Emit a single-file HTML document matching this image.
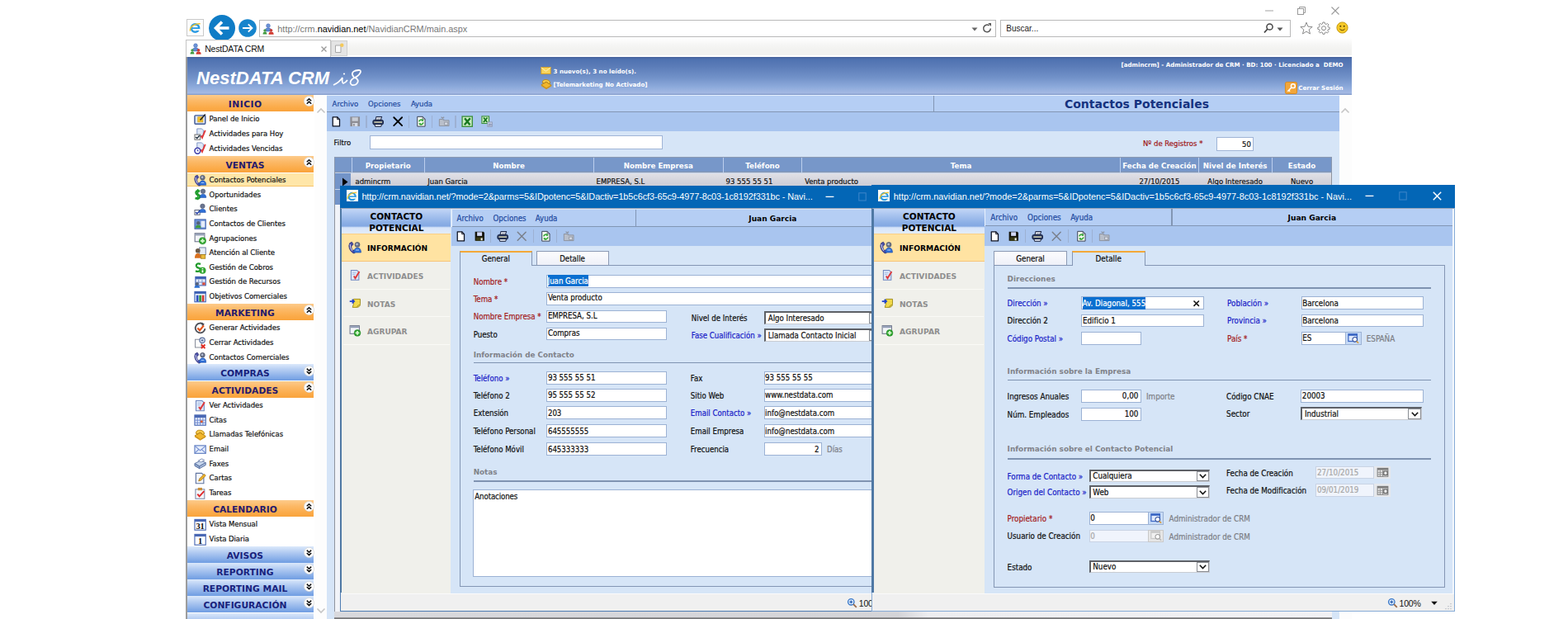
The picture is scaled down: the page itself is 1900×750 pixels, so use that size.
<!DOCTYPE html>
<html lang="es">
<head>
<meta charset="utf-8">
<title>NestDATA CRM</title>
<style>
html,body{margin:0;padding:0;background:#fff;}
body{width:1900px;height:750px;overflow:hidden;position:relative;font-family:"Liberation Sans",sans-serif;}
div,svg{position:absolute;}
svg{overflow:visible;display:block;}
.win{overflow:hidden;}
.abs{position:absolute;}
.t,.ui,.hd,.sh,.ttl,.gh,.tb,.ph,.pi,.pt,.sec,.logo{white-space:nowrap;}
.t{font-family:"DejaVu Sans Condensed","Liberation Sans",sans-serif;font-size:9.45px;color:#111;letter-spacing:0;-webkit-text-stroke:0.2px currentColor;}
.sb{letter-spacing:-0.03px;}
.p1 .t{font-size:9.6px;}
.p2 .t{font-size:9.75px;}
.p2 .sec{font-size:8.9px;}
.p2 .pt{font-size:9.15px;}
.mn{color:#1f4aa0;}
.dis{color:#a9a9a9;}
.ui{font-family:"Liberation Sans",sans-serif;font-size:10.9px;color:#444;}
.tb{font-family:"Liberation Sans",sans-serif;font-size:10.9px;color:#fff;}
.hd{font-family:"DejaVu Sans","Liberation Sans",sans-serif;font-size:7.1px;font-weight:700;color:#fff;}
.sh{font-family:"DejaVu Sans","Liberation Sans",sans-serif;font-size:10.7px;font-weight:700;color:#251a6c;}
.ttl{font-family:"DejaVu Sans","Liberation Sans",sans-serif;font-size:14px;font-weight:700;color:#15327f;}
.gh{font-family:"DejaVu Sans","Liberation Sans",sans-serif;font-size:8.7px;font-weight:700;color:#fff;}
.ph{font-family:"DejaVu Sans","Liberation Sans",sans-serif;font-size:10.5px;font-weight:700;color:#000;}
.pi{font-family:"DejaVu Sans","Liberation Sans",sans-serif;font-size:9.6px;font-weight:700;}
.pt{font-family:"DejaVu Sans","Liberation Sans",sans-serif;font-size:9.05px;font-weight:700;color:#000;}
.sec{font-family:"DejaVu Sans","Liberation Sans",sans-serif;font-size:8.8px;font-weight:700;color:#808289;}
.logo{font-family:"Liberation Sans",sans-serif;font-size:22px;font-weight:700;font-style:italic;color:#fff;}
</style>
</head>
<body>
<div style="left:225.3px;top:0px;width:1412.9px;height:69.5px;background:linear-gradient(#fff 0,#fff 46px,#f6f6f5 54px,#f2f2f0 60px,#f2f2f0 66.5px,#fff 67.5px);"></div>
<div style="left:226.2px;top:23.4px;width:20.4px;height:20.4px;background:#fdfdfd;border:1px solid #c9c9c9;box-sizing:border-box;"></div>
<svg style="left:229.2px;top:26.2px;" width="15" height="15" viewBox="0 0 16 16"><circle cx="8" cy="8.6" r="5" fill="none" stroke="#2b9be3" stroke-width="2.7"/><rect x="4" y="7.7" width="9.4" height="1.9" fill="#2b9be3"/><rect x="9.2" y="9.6" width="5" height="2.1" fill="#fdfdf6"/><path d="M1.6 12.4 C0.6 7.4 7 2.2 14.6 3" fill="none" stroke="#f0c430" stroke-width="1.6"/></svg>
<svg style="left:252px;top:17px;" width="34" height="34" viewBox="0 0 34 34"><circle cx="17" cy="17" r="16" fill="#0f7cc6"/><path d="M25.5 17 H10.5 M17 9.5 L9.5 17 L17 24.5" fill="none" stroke="#fff" stroke-width="3.6"/></svg>
<svg style="left:288px;top:22px;" width="24" height="24" viewBox="0 0 24 24"><circle cx="12" cy="12" r="10.8" fill="#1684cc"/><path d="M6 12 H17.5 M12.8 7.3 L17.5 12 L12.8 16.7" fill="none" stroke="#fff" stroke-width="1.8"/></svg>
<div style="left:314px;top:24px;width:892.8px;height:21px;background:#fff;border:1px solid #b9b9b9;box-sizing:border-box;"></div>
<svg style="left:317.5px;top:27.5px;" width="14" height="14" viewBox="0 0 16 16"><circle cx="8" cy="3.6" r="2.7" fill="#6c93d8" stroke="#4a6fb4" stroke-width=".6"/><path d="M3.6 11.4 Q3.6 6.6 8 6.6 Q12.4 6.6 12.4 11.4Z" fill="#5f8ad6" stroke="#4268b0" stroke-width=".6"/><circle cx="3.4" cy="10.2" r="1.9" fill="#4c9c46"/><path d="M0.6 15.4 Q0.6 12 3.4 12 Q6.2 12 6.2 15.4Z" fill="#3f9a3f"/><circle cx="12" cy="10" r="2.1" fill="#c9403a"/><path d="M8.6 15.6 Q8.6 12 12 12 Q15.6 12 15.6 15.6Z" fill="#d23a2f"/></svg>
<div class="ui" style="left:336.3px;top:27.6px;height:14px;line-height:14px;"><span style="color:#777">http://crm.</span><span style="color:#000">navidian.net</span><span style="color:#777">/NavidianCRM/main.aspx</span></div>
<svg style="left:1176px;top:31px;" width="10" height="8" viewBox="0 0 10 8"><path d="M1.5 2.5 H8.5 L5 6.5Z" fill="#666"/></svg>
<svg style="left:1189px;top:27px;" width="14" height="14" viewBox="0 0 14 14"><path d="M11.3 7.5 A4.3 4.3 0 1 1 9.6 4" fill="none" stroke="#555" stroke-width="1.5"/><path d="M8.2 1 H12 V5Z" fill="#555"/></svg>
<div style="left:1212px;top:24px;width:351.6px;height:21px;background:#fff;border:1px solid #b9b9b9;box-sizing:border-box;"></div>
<div class="ui" style="left:1219.3px;top:28.2px;height:14px;line-height:14px;color:#222;font-size:10px;">Buscar...</div>
<svg style="left:1530px;top:27px;" width="14" height="14" viewBox="0 0 14 14"><circle cx="8.5" cy="5.5" r="3.6" fill="none" stroke="#444" stroke-width="1.5"/><path d="M6 8 L2 12.5" stroke="#444" stroke-width="1.8"/></svg>
<svg style="left:1546px;top:31px;" width="10" height="8" viewBox="0 0 10 8"><path d="M1.5 2.5 H8.5 L5 6.5Z" fill="#555"/></svg>
<svg style="left:1574.5px;top:25.5px;" width="16" height="16" viewBox="0 0 16 16"><path d="M8 1.2 L10 6.2 L15.2 6.5 L11.2 9.9 L12.5 15 L8 12.1 L3.5 15 L4.8 9.9 L0.8 6.5 L6 6.2Z" fill="#fff" stroke="#8a8a8a" stroke-width="1"/></svg>
<svg style="left:1596px;top:25.6px;" width="16" height="16" viewBox="0 0 16 16"><path d="M6.9 1 H9.1 L9.5 2.9 L10.9 3.5 L12.5 2.4 L13.9 3.9 L12.9 5.5 L13.4 6.9 L15.2 7.2 V9.3 L13.4 9.6 L12.8 11 L13.8 12.5 L12.4 14 L10.8 12.9 L9.5 13.5 L9.1 15.3 H6.9 L6.5 13.5 L5.2 12.9 L3.6 14 L2.2 12.5 L3.2 11 L2.6 9.6 L0.8 9.3 V7.2 L2.6 6.9 L3.2 5.5 L2.2 3.9 L3.6 2.4 L5.2 3.5 L6.5 2.9Z" fill="#fff" stroke="#8a8a8a" stroke-width="1"/><circle cx="8" cy="8.2" r="2.5" fill="none" stroke="#8a8a8a" stroke-width="1"/></svg>
<svg style="left:1618.5px;top:26px;" width="15" height="15" viewBox="0 0 15 15"><circle cx="7.5" cy="7.5" r="6.6" fill="#f6c928" stroke="#c79a10" stroke-width="1"/><circle cx="5.3" cy="5.8" r="1" fill="#5a4200"/><circle cx="9.7" cy="5.8" r="1" fill="#5a4200"/><path d="M4.3 9 Q7.5 12.4 10.7 9" fill="none" stroke="#5a4200" stroke-width="1"/></svg>
<svg style="left:1532px;top:8px;" width="12" height="10" viewBox="0 0 12 10"><path d="M1 5 H11" stroke="#b8b8b8" stroke-width="1.3"/></svg>
<svg style="left:1571px;top:7px;" width="12" height="12" viewBox="0 0 12 12"><rect x="1.5" y="3.5" width="7" height="7" fill="none" stroke="#9a9a9a" stroke-width="1"/><path d="M3.5 3.5 V1.5 H10.5 V8.5 H8.5" fill="none" stroke="#9a9a9a" stroke-width="1"/></svg>
<svg style="left:1612px;top:7px;" width="12" height="12" viewBox="0 0 12 12"><path d="M1.5 1.5 L10.5 10.5 M10.5 1.5 L1.5 10.5" stroke="#9a9a9a" stroke-width="1.1"/></svg>
<div style="left:225.3px;top:47.6px;width:175.7px;height:22.4px;background:#fff;border:1px solid #c4c4c4;border-bottom:0;box-sizing:border-box;"></div>
<svg style="left:230px;top:52px;" width="14" height="14" viewBox="0 0 16 16"><circle cx="8" cy="3.6" r="2.7" fill="#6c93d8" stroke="#4a6fb4" stroke-width=".6"/><path d="M3.6 11.4 Q3.6 6.6 8 6.6 Q12.4 6.6 12.4 11.4Z" fill="#5f8ad6" stroke="#4268b0" stroke-width=".6"/><circle cx="3.4" cy="10.2" r="1.9" fill="#4c9c46"/><path d="M0.6 15.4 Q0.6 12 3.4 12 Q6.2 12 6.2 15.4Z" fill="#3f9a3f"/><circle cx="12" cy="10" r="2.1" fill="#c9403a"/><path d="M8.6 15.6 Q8.6 12 12 12 Q15.6 12 15.6 15.6Z" fill="#d23a2f"/></svg>
<div class="ui" style="left:248.2px;top:51.8px;height:14px;line-height:14px;color:#111;font-size:10.5px;letter-spacing:-0.2px;">NestDATA CRM</div>
<svg style="left:387.5px;top:54.5px;" width="9" height="9" viewBox="0 0 9 9"><path d="M1.5 1.5 L7.5 7.5 M7.5 1.5 L1.5 7.5" stroke="#9a9a9a" stroke-width="1.3"/></svg>
<div style="left:401.3px;top:48.6px;width:19.3px;height:19px;background:#e4e4e4;border:1px solid #cfcfcf;box-sizing:border-box;"></div>
<svg style="left:405px;top:51.5px;" width="12" height="13" viewBox="0 0 12 13"><path d="M1.5 3 H8 V11.5 H1.5Z" fill="#fafafa" stroke="#a8a8a8" stroke-width="1"/><circle cx="9.3" cy="2.8" r="2.2" fill="#f4c95a"/></svg>
<div style="left:225.3px;top:69.3px;width:1412.9px;height:45.9px;background:linear-gradient(#46619a 0,#4f72b1 3px,#5b7cb8 25%,#7292c9 55%,#8eabdc 80%,#a4b9e3 95%,#7f98c9 100%);"></div>
<div class="logo" style="left:238.1px;top:80.6px;height:28px;line-height:28px;">NestDATA CRM</div>
<svg style="left:402px;top:82px;" width="38" height="24" viewBox="0 0 38 24"><path d="M2 21 Q9 18 13 12 Q12 18 14 19 Q17 18 19 15" fill="none" stroke="#fff" stroke-width="1.7"/><circle cx="15" cy="7.5" r="1.1" fill="#fff"/><path d="M33 3 Q24 3.5 25 8.5 Q26 12 30 13 Q34 17 29 20.5 Q23 22.5 22.5 18 Q23 14 28 12 Q34 9 35 5 Q35 2.5 32 3" fill="none" stroke="#fff" stroke-width="1.8"/></svg>
<svg style="left:654.5px;top:79.5px;" width="13" height="11" viewBox="0 2 16 12"><rect x="1" y="3" width="14" height="10" fill="#f8d45a" stroke="#d49a1a" stroke-width="1"/><path d="M1 3.5 L8 9 L15 3.5" fill="none" stroke="#fff3c0" stroke-width="1.2"/></svg>
<div class="hd" style="left:670.5px;top:79.9px;height:14px;line-height:14px;">3 nuevo(s), 3 no leído(s).</div>
<svg style="left:654.5px;top:94.5px;" width="14" height="13" viewBox="0 1 16 14"><path d="M1 9.4 L8 5.6 L15 10 L8 14.4Z" fill="#f2b62c" stroke="#b8820e" stroke-width="1"/><path d="M1 9.4 V11 L8 15.6 V14.4Z M8 14.4 V15.6 L15 11.4 V10Z" fill="#d4961a"/><path d="M2.6 6.6 Q2.6 1.8 8 2.4 Q13.4 3 13.2 7.4 L10.6 7.8 Q10.2 5.6 8 5.4 Q6 5.2 5.4 7.2Z" fill="#f8cc4c" stroke="#b8820e" stroke-width="1"/></svg>
<div class="hd" style="left:670.5px;top:95.9px;height:14px;line-height:14px;">[Telemarketing No Activado]</div>
<div class="hd" style="left:1127.6px;top:71.7px;height:14px;line-height:14px;width:500px;text-align:right;">[admincrm] - Administrador de CRM · BD: 100 · Licenciado a&nbsp; DEMO</div>
<svg style="left:1557px;top:98.5px;" width="15" height="15" viewBox="0 0 16 16"><rect x="0.5" y="0.5" width="15" height="15" rx="2" fill="#f2a63a" stroke="#d98a1c" stroke-width="1"/><circle cx="10.5" cy="5.5" r="2.6" fill="none" stroke="#fff" stroke-width="1.6"/><path d="M8.5 7.5 L3.5 12.5 M5 11 L6.5 12.5" stroke="#fff" stroke-width="1.6"/></svg>
<div class="hd" style="left:1127.6px;top:99.5px;height:14px;line-height:14px;width:500px;text-align:right;">Cerrar Sesión</div>
<div style="left:225.3px;top:115px;width:155.2px;height:635px;background:#fff;"></div>
<div style="left:225.4px;top:69.3px;width:1.2px;height:680.7px;background:#9c9c9c;"></div>
<div style="left:380.5px;top:115px;width:15.7px;height:635px;background:#fdfdfd;"></div>
<svg style="left:382.5px;top:129.5px;" width="12" height="8" viewBox="0 0 12 8"><path d="M1.5 6.5 L6 2 L10.5 6.5" fill="none" stroke="#c6c6c6" stroke-width="1.6"/></svg>
<svg style="left:382.5px;top:735.5px;" width="12" height="8" viewBox="0 0 12 8"><path d="M1.5 1.5 L6 6 L10.5 1.5" fill="none" stroke="#c6c6c6" stroke-width="1.6"/></svg>
<div style="left:227.2px;top:114.8px;width:153.3px;height:20px;background:linear-gradient(#fdcb8b 0,#fcb967 35%,#fbab49 75%,#f9a33c 100%);"></div>
<div class="sh" style="left:227.2px;top:118.8px;height:16px;line-height:16px;width:139.5px;text-align:center;letter-spacing:0.5px;text-indent:0.5px;">INICIO</div>
<svg style="left:367.5px;top:116.1px;" width="13" height="13" viewBox="0 0 13 13"><circle cx="6.5" cy="6.5" r="6" fill="#fff" stroke="#d8d8d8" stroke-width=".8"/><path d="M3.8 6.3 L6.5 3.7 L9.2 6.3 M3.8 9.7 L6.5 7.1 L9.2 9.7" fill="none" stroke="#111" stroke-width="1.5"/></svg>
<svg style="left:234.8px;top:137.1px;" width="15.2" height="15.2" viewBox="0 0 16 16"><rect x="1" y="3" width="13.5" height="11" rx="1" fill="#dfe7f6" stroke="#3f5894" stroke-width="1.5"/><rect x="5" y="5" width="6.5" height="6.5" fill="#f2c12e" stroke="#c99a14" stroke-width=".6"/><path d="M8 9 L14.5 1.5" stroke="#222" stroke-width="1.6"/></svg>
<div class="t sb" style="left:253.6px;top:137.2px;height:14px;line-height:14px;">Panel de Inicio</div>
<svg style="left:234.8px;top:154.75px;" width="15.2" height="15.2" viewBox="0 0 16 16"><path d="M4 1 H10 L12 3 V10 H4Z" fill="#dfe8f7" stroke="#7d93c4" stroke-width="1"/><rect x="1" y="8.5" width="7" height="6.5" fill="#fff" stroke="#666" stroke-width="1"/><path d="M2.2 11.5 L4 13.3 L7 9.8" stroke="#123" stroke-width="1.4" fill="none"/><path d="M9 10 L10.5 12.5 L14.5 3" stroke="#e0383a" stroke-width="2" fill="none"/></svg>
<div class="t sb" style="left:253.6px;top:154.85px;height:14px;line-height:14px;">Actividades para Hoy</div>
<svg style="left:234.8px;top:172.4px;" width="15.2" height="15.2" viewBox="0 0 16 16"><path d="M4 1 H10 L12 3 V10 H4Z" fill="#dfe8f7" stroke="#7d93c4" stroke-width="1"/><circle cx="4.6" cy="11.3" r="3.6" fill="#fff" stroke="#3a3aa8" stroke-width="1.6"/><path d="M4.6 9.5 V11.5 H6" stroke="#3a3aa8" stroke-width="1" fill="none"/><path d="M9 10 L10.5 12.5 L14.5 3" stroke="#e0383a" stroke-width="2" fill="none"/></svg>
<div class="t sb" style="left:253.6px;top:172.5px;height:14px;line-height:14px;">Actividades Vencidas</div>
<div style="left:227.2px;top:188.5px;width:153.3px;height:20px;background:linear-gradient(#fdcb8b 0,#fcb967 35%,#fbab49 75%,#f9a33c 100%);"></div>
<div class="sh" style="left:227.2px;top:192.5px;height:16px;line-height:16px;width:139.5px;text-align:center;">VENTAS</div>
<svg style="left:367.5px;top:189.8px;" width="13" height="13" viewBox="0 0 13 13"><circle cx="6.5" cy="6.5" r="6" fill="#fff" stroke="#d8d8d8" stroke-width=".8"/><path d="M3.8 6.3 L6.5 3.7 L9.2 6.3 M3.8 9.7 L6.5 7.1 L9.2 9.7" fill="none" stroke="#111" stroke-width="1.5"/></svg>
<div style="left:227.2px;top:209.5px;width:153.3px;height:16.5px;background:#ffe6a8;border-bottom:1px solid #f7c46a;box-sizing:border-box;"></div>
<svg style="left:234.8px;top:210.8px;" width="15.2" height="15.2" viewBox="0 0 16 16"><path d="M4.4 1.2 Q0.8 1.6 0.8 6 Q1.2 11.6 6 14.8 Q8.2 15.4 8.8 13.2 L6.6 10.8 Q5.4 11.8 4.7 10.4 Q3.5 8 4 5.6 Q5.8 5.6 6 3.8Z" fill="#4a4fa6" stroke="#2c2f74" stroke-width=".7"/><path d="M2.2 4 Q2 8 4.6 11.8" fill="none" stroke="#d5d8f4" stroke-width="1"/><circle cx="11" cy="4.4" r="3" fill="#6a7288" stroke="#474e62" stroke-width=".6"/><path d="M6.9 14 Q6.9 8.2 11.1 8.2 Q15.5 8.2 15.5 14Z" fill="#2f6fd6" stroke="#1c4ca6" stroke-width=".6"/><circle cx="10.6" cy="4" r="1.3" fill="#b4bdd2"/><path d="M9.2 11 H13" stroke="#a8c8f6" stroke-width="1.1"/></svg>
<div class="t sb" style="left:253.6px;top:210.9px;height:14px;line-height:14px;">Contactos Potenciales</div>
<svg style="left:234.8px;top:228.45px;" width="15.2" height="15.2" viewBox="0 0 16 16"><path d="M7.6 4 Q2.6 2.2 2.6 6 Q2.8 7.8 5 8.4 Q8 9.2 7.4 11.6 Q6.4 14 1.6 12.6" fill="none" stroke="#1f9c2c" stroke-width="2.7"/><path d="M4.9 1.2 V15" stroke="#1f9c2c" stroke-width="1.7"/><circle cx="11.6" cy="4" r="2.9" fill="#6a7590" stroke="#4a5268" stroke-width=".6"/><path d="M7.8 12 Q7.8 7.6 11.6 7.6 Q15.6 7.6 15.6 12Z" fill="#2f6fd6" stroke="#1f4fa8" stroke-width=".6"/></svg>
<div class="t sb" style="left:253.6px;top:228.55px;height:14px;line-height:14px;">Oportunidades</div>
<svg style="left:234.8px;top:246.1px;" width="15.2" height="15.2" viewBox="0 0 16 16"><rect x="1" y="9" width="6.6" height="6" fill="#fff" stroke="#555c70" stroke-width="1"/><path d="M2.2 11.6 L4 13.6 L7.6 9.4" stroke="#2540a8" stroke-width="1.6" fill="none"/><circle cx="11" cy="4" r="2.9" fill="#6a7590" stroke="#4a5268" stroke-width=".6"/><path d="M7 12 Q7 7.6 11 7.6 Q15 7.6 15 12Z" fill="#2f6fd6" stroke="#1f4fa8" stroke-width=".6"/></svg>
<div class="t sb" style="left:253.6px;top:246.2px;height:14px;line-height:14px;">Clientes</div>
<svg style="left:234.8px;top:263.75px;" width="15.2" height="15.2" viewBox="0 0 16 16"><rect x="1" y="2" width="14" height="12" fill="#6f93d8" stroke="#3e5fa8" stroke-width="1"/><rect x="9" y="4" width="5" height="8" fill="#e5ecf8"/><circle cx="5.5" cy="6.5" r="2.3" fill="#54627a"/><path d="M2 13 Q2 9 5.5 9 Q9 9 9 13Z" fill="#3f9a3f"/></svg>
<div class="t sb" style="left:253.6px;top:263.85px;height:14px;line-height:14px;">Contactos de Clientes</div>
<svg style="left:234.8px;top:281.4px;" width="15.2" height="15.2" viewBox="0 0 16 16"><rect x="1.2" y="1.8" width="12.4" height="10.6" fill="#f2f4f8" stroke="#6a7288" stroke-width="1.1"/><rect x="1.8" y="2.4" width="11.2" height="2.2" fill="#8f9ab4"/><circle cx="11" cy="11.4" r="4.3" fill="#2ea52e" stroke="#1c7a1c" stroke-width=".5"/><path d="M11 8.8 V14 M8.4 11.4 H13.6" stroke="#d8f8d0" stroke-width="1.9"/></svg>
<div class="t sb" style="left:253.6px;top:281.5px;height:14px;line-height:14px;">Agrupaciones</div>
<svg style="left:234.8px;top:299.05px;" width="15.2" height="15.2" viewBox="0 0 16 16"><rect x="7" y="1" width="8" height="9" fill="#e6ecf6" stroke="#6c7da0" stroke-width="1"/><circle cx="5" cy="5" r="3" fill="#6a5a4a"/><path d="M1 14.5 Q1 8.5 5 8.5 Q9 8.5 9 14.5Z" fill="#d9701e"/><rect x="9" y="10" width="5.5" height="5" fill="#e9b93a" stroke="#a57a10" stroke-width=".8"/></svg>
<div class="t sb" style="left:253.6px;top:299.15px;height:14px;line-height:14px;">Atención al Cliente</div>
<svg style="left:234.8px;top:316.7px;" width="15.2" height="15.2" viewBox="0 0 16 16"><path d="M8.5 3 Q2.5 1.5 3 5.5 Q3.5 7.5 6 8 Q9 8.8 8 11 Q7 13.5 2 12" fill="none" stroke="#1f9a2a" stroke-width="2.4"/><circle cx="11" cy="11.3" r="4.3" fill="#2fa52f"/><path d="M11 8.5 V9.8 M11 10.8 V14" stroke="#fff" stroke-width="1.8"/></svg>
<div class="t sb" style="left:253.6px;top:316.8px;height:14px;line-height:14px;">Gestión de Cobros</div>
<svg style="left:234.8px;top:334.35px;" width="15.2" height="15.2" viewBox="0 0 16 16"><rect x="2" y="1.5" width="13" height="11" fill="#e8eefb" stroke="#3f62b4" stroke-width="1.2"/><rect x="2" y="1.5" width="13" height="3" fill="#3f62b4"/><path d="M6 5 V12 M10.5 5 V12 M2 8.5 H15" stroke="#7c92c8" stroke-width="1"/><rect x="10.8" y="8.8" width="3.6" height="3.2" fill="#d84a3a"/><circle cx="4" cy="10.5" r="2.2" fill="#54627a"/><path d="M0.5 15.5 Q0.5 12.3 4 12.3 Q7.5 12.3 7.5 15.5Z" fill="#2c6fd1"/></svg>
<div class="t sb" style="left:253.6px;top:334.45px;height:14px;line-height:14px;">Gestión de Recursos</div>
<svg style="left:234.8px;top:352px;" width="15.2" height="15.2" viewBox="0 0 16 16"><rect x="1" y="1.5" width="14" height="13" fill="#e8eefb" stroke="#3f62b4" stroke-width="1.2"/><rect x="1" y="1.5" width="14" height="2.6" fill="#3f62b4"/><rect x="3" y="6" width="2.8" height="8" fill="#2b50c0"/><rect x="6.6" y="6" width="2.8" height="8" fill="#2f9a3a"/><rect x="10.2" y="6" width="2.8" height="8" fill="#d23a2f"/></svg>
<div class="t sb" style="left:253.6px;top:352.1px;height:14px;line-height:14px;">Objetivos Comerciales</div>
<div style="left:227.2px;top:368px;width:153.3px;height:20px;background:linear-gradient(#fdcb8b 0,#fcb967 35%,#fbab49 75%,#f9a33c 100%);"></div>
<div class="sh" style="left:227.2px;top:372px;height:16px;line-height:16px;width:139.5px;text-align:center;">MARKETING</div>
<svg style="left:367.5px;top:369.3px;" width="13" height="13" viewBox="0 0 13 13"><circle cx="6.5" cy="6.5" r="6" fill="#fff" stroke="#d8d8d8" stroke-width=".8"/><path d="M3.8 6.3 L6.5 3.7 L9.2 6.3 M3.8 9.7 L6.5 7.1 L9.2 9.7" fill="none" stroke="#111" stroke-width="1.5"/></svg>
<svg style="left:234.8px;top:390.3px;" width="15.2" height="15.2" viewBox="0 0 16 16"><path d="M12.6 3.6 A6.2 6.2 0 1 0 14.2 8.6" fill="none" stroke="#4c4f58" stroke-width="1.9"/><path d="M9.6 1.2 L13.4 3 L10.4 5.4Z" fill="#4c4f58"/><path d="M4.6 7.8 L7.4 10.8 L12.6 4.6" fill="none" stroke="#e2541c" stroke-width="2.3"/></svg>
<div class="t sb" style="left:253.6px;top:390.4px;height:14px;line-height:14px;">Generar Actividades</div>
<svg style="left:234.8px;top:407.95px;" width="15.2" height="15.2" viewBox="0 0 16 16"><path d="M1.6 3.4 H7.6 L9.6 5.4 V13.6 H1.6Z" fill="#fdfdfd" stroke="#8a8f9c" stroke-width="1.1"/><circle cx="10.6" cy="4.6" r="3.4" fill="#d9e2f2" stroke="#5a6f9c" stroke-width="1.2"/><circle cx="10.6" cy="4.6" r="1.3" fill="#5a6f9c"/><path d="M9.4 10 L14.2 14.8 M14.2 10 L9.4 14.8" stroke="#e2281e" stroke-width="1.9"/></svg>
<div class="t sb" style="left:253.6px;top:408.05px;height:14px;line-height:14px;">Cerrar Actividades</div>
<svg style="left:234.8px;top:425.6px;" width="15.2" height="15.2" viewBox="0 0 16 16"><path d="M4.4 1.2 Q0.8 1.6 0.8 6 Q1.2 11.6 6 14.8 Q8.2 15.4 8.8 13.2 L6.6 10.8 Q5.4 11.8 4.7 10.4 Q3.5 8 4 5.6 Q5.8 5.6 6 3.8Z" fill="#4a4fa6" stroke="#2c2f74" stroke-width=".7"/><path d="M2.2 4 Q2 8 4.6 11.8" fill="none" stroke="#d5d8f4" stroke-width="1"/><circle cx="11" cy="4.4" r="3" fill="#6a7288" stroke="#474e62" stroke-width=".6"/><path d="M6.9 14 Q6.9 8.2 11.1 8.2 Q15.5 8.2 15.5 14Z" fill="#2f6fd6" stroke="#1c4ca6" stroke-width=".6"/><circle cx="10.6" cy="4" r="1.3" fill="#b4bdd2"/><path d="M9.2 11 H13" stroke="#a8c8f6" stroke-width="1.1"/></svg>
<div class="t sb" style="left:253.6px;top:425.7px;height:14px;line-height:14px;">Contactos Comerciales</div>
<div style="left:227.2px;top:441.4px;width:153.3px;height:20px;background:linear-gradient(#dce9fb 0,#b9d0f3 30%,#8fb3ea 70%,#6f9de2 100%);"></div>
<div class="sh" style="left:227.2px;top:445.4px;height:16px;line-height:16px;width:139.5px;text-align:center;color:#18227c;">COMPRAS</div>
<svg style="left:367.5px;top:442.7px;" width="13" height="13" viewBox="0 0 13 13"><circle cx="6.5" cy="6.5" r="6" fill="#fff" stroke="#d8d8d8" stroke-width=".8"/><path d="M3.8 3.6 L6.5 6.2 L9.2 3.6 M3.8 7 L6.5 9.6 L9.2 7" fill="none" stroke="#111" stroke-width="1.5"/></svg>
<div style="left:227.2px;top:461.5px;width:153.3px;height:20px;background:linear-gradient(#fdcb8b 0,#fcb967 35%,#fbab49 75%,#f9a33c 100%);"></div>
<div class="sh" style="left:227.2px;top:465.5px;height:16px;line-height:16px;width:139.5px;text-align:center;">ACTIVIDADES</div>
<svg style="left:367.5px;top:462.8px;" width="13" height="13" viewBox="0 0 13 13"><circle cx="6.5" cy="6.5" r="6" fill="#fff" stroke="#d8d8d8" stroke-width=".8"/><path d="M3.8 6.3 L6.5 3.7 L9.2 6.3 M3.8 9.7 L6.5 7.1 L9.2 9.7" fill="none" stroke="#111" stroke-width="1.5"/></svg>
<svg style="left:234.8px;top:483.8px;" width="15.2" height="15.2" viewBox="0 0 16 16"><path d="M2.6 1.6 H10.4 L13 4.2 V14.4 H2.6Z" fill="#dbe7f9" stroke="#6f86c0" stroke-width="1.1"/><path d="M4.4 4.6 H9 M4.4 7 H8" stroke="#9fb4e0" stroke-width=".9"/><path d="M6.4 9.4 L8.2 12.2 L13.6 3.4" stroke="#de3a3c" stroke-width="2.1" fill="none"/></svg>
<div class="t sb" style="left:253.6px;top:483.9px;height:14px;line-height:14px;">Ver Actividades</div>
<svg style="left:234.8px;top:501.45px;" width="15.2" height="15.2" viewBox="0 0 16 16"><rect x="1" y="2" width="14" height="13" fill="#e9effb" stroke="#4a68b4" stroke-width="1.2"/><rect x="1" y="2" width="14" height="3.4" fill="#4a68b4"/><path d="M4.5 5.4 V15 M8 5.4 V15 M11.5 5.4 V15 M1 8.6 H15 M1 11.8 H15" stroke="#6f88d0" stroke-width="1"/><rect x="8.4" y="9" width="2.8" height="2.6" fill="#e0582a"/></svg>
<div class="t sb" style="left:253.6px;top:501.55px;height:14px;line-height:14px;">Citas</div>
<svg style="left:234.8px;top:519.1px;" width="15.2" height="15.2" viewBox="0 0 16 16"><path d="M1 9.4 L8 5.6 L15 10 L8 14.4Z" fill="#f2b62c" stroke="#b8820e" stroke-width="1"/><path d="M1 9.4 V11 L8 15.6 V14.4Z M8 14.4 V15.6 L15 11.4 V10Z" fill="#d4961a"/><path d="M2.6 6.6 Q2.6 1.8 8 2.4 Q13.4 3 13.2 7.4 L10.6 7.8 Q10.2 5.6 8 5.4 Q6 5.2 5.4 7.2Z" fill="#f8cc4c" stroke="#b8820e" stroke-width="1"/></svg>
<div class="t sb" style="left:253.6px;top:519.2px;height:14px;line-height:14px;">Llamadas Telefónicas</div>
<svg style="left:234.8px;top:536.75px;" width="15.2" height="15.2" viewBox="0 0 16 16"><rect x="1" y="3" width="14" height="10" fill="#e6eefc" stroke="#5f7dc0" stroke-width="1.2"/><path d="M1.2 3.6 L8 9.4 L14.8 3.6 M1.2 12.6 L6 8 M14.8 12.6 L10 8" fill="none" stroke="#6f8ad0" stroke-width="1.1"/></svg>
<div class="t sb" style="left:253.6px;top:536.85px;height:14px;line-height:14px;">Email</div>
<svg style="left:234.8px;top:554.4px;" width="15.2" height="15.2" viewBox="0 0 16 16"><path d="M1 8 L9 4 L15 7 L7 11.5Z" fill="#c9d8ee" stroke="#5c72a0" stroke-width="1"/><path d="M1 8 V11 L7 14.5 V11.5Z" fill="#8ea6cc" stroke="#5c72a0" stroke-width="1"/><path d="M7 11.5 V14.5 L15 10 V7Z" fill="#a9bcdc" stroke="#5c72a0" stroke-width="1"/><path d="M5.6 4.4 L10 2 L13.4 3.8 L9 6.2Z" fill="#f8fafd" stroke="#5c72a0" stroke-width=".8"/></svg>
<div class="t sb" style="left:253.6px;top:554.5px;height:14px;line-height:14px;">Faxes</div>
<svg style="left:234.8px;top:572.05px;" width="15.2" height="15.2" viewBox="0 0 16 16"><path d="M2.5 1.5 H10 L12.5 4 V14.5 H2.5Z" fill="#f5f7fc" stroke="#5f74a0" stroke-width="1.2"/><path d="M6 11.5 L7 8.5 L13 2.5 L15 4.5 L9 10.5Z" fill="#f0b429" stroke="#9a6a10" stroke-width=".8"/></svg>
<div class="t sb" style="left:253.6px;top:572.15px;height:14px;line-height:14px;">Cartas</div>
<svg style="left:234.8px;top:589.7px;" width="15.2" height="15.2" viewBox="0 0 16 16"><rect x="2" y="3" width="11.5" height="12" fill="#f5f7fc" stroke="#7d8aa8" stroke-width="1.1"/><rect x="5" y="1" width="5.5" height="3.4" fill="#c98f3a"/><path d="M4.5 9 L7 12 L13 5.5" stroke="#e0282a" stroke-width="2" fill="none"/></svg>
<div class="t sb" style="left:253.6px;top:589.8px;height:14px;line-height:14px;">Tareas</div>
<div style="left:227.2px;top:605.7px;width:153.3px;height:20px;background:linear-gradient(#fdcb8b 0,#fcb967 35%,#fbab49 75%,#f9a33c 100%);"></div>
<div class="sh" style="left:227.2px;top:609.7px;height:16px;line-height:16px;width:139.5px;text-align:center;">CALENDARIO</div>
<svg style="left:367.5px;top:607px;" width="13" height="13" viewBox="0 0 13 13"><circle cx="6.5" cy="6.5" r="6" fill="#fff" stroke="#d8d8d8" stroke-width=".8"/><path d="M3.8 6.3 L6.5 3.7 L9.2 6.3 M3.8 9.7 L6.5 7.1 L9.2 9.7" fill="none" stroke="#111" stroke-width="1.5"/></svg>
<svg style="left:234.8px;top:628px;" width="15.2" height="15.2" viewBox="0 0 16 16"><rect x="1" y="1.5" width="14" height="13.5" fill="#fff" stroke="#4a68b4" stroke-width="1.2"/><rect x="1" y="1.5" width="14" height="2.8" fill="#4a68b4"/><text x="8" y="13.3" text-anchor="middle" font-family="Liberation Serif,serif" font-weight="700" font-size="11" fill="#111">31</text></svg>
<div class="t sb" style="left:253.6px;top:628.1px;height:14px;line-height:14px;">Vista Mensual</div>
<svg style="left:234.8px;top:645.65px;" width="15.2" height="15.2" viewBox="0 0 16 16"><rect x="1" y="1.5" width="14" height="13.5" fill="#fff" stroke="#4a68b4" stroke-width="1.2"/><rect x="1" y="1.5" width="14" height="2.8" fill="#4a68b4"/><text x="8" y="13.3" text-anchor="middle" font-family="Liberation Serif,serif" font-weight="700" font-size="11" fill="#111">1</text></svg>
<div class="t sb" style="left:253.6px;top:645.75px;height:14px;line-height:14px;">Vista Diaria</div>
<div style="left:227.2px;top:662px;width:153.3px;height:20px;background:linear-gradient(#dce9fb 0,#b9d0f3 30%,#8fb3ea 70%,#6f9de2 100%);"></div>
<div class="sh" style="left:227.2px;top:666px;height:16px;line-height:16px;width:139.5px;text-align:center;color:#18227c;">AVISOS</div>
<svg style="left:367.5px;top:663.3px;" width="13" height="13" viewBox="0 0 13 13"><circle cx="6.5" cy="6.5" r="6" fill="#fff" stroke="#d8d8d8" stroke-width=".8"/><path d="M3.8 3.6 L6.5 6.2 L9.2 3.6 M3.8 7 L6.5 9.6 L9.2 7" fill="none" stroke="#111" stroke-width="1.5"/></svg>
<div style="left:227.2px;top:682px;width:153.3px;height:20px;background:linear-gradient(#dce9fb 0,#b9d0f3 30%,#8fb3ea 70%,#6f9de2 100%);"></div>
<div class="sh" style="left:227.2px;top:686px;height:16px;line-height:16px;width:139.5px;text-align:center;color:#18227c;">REPORTING</div>
<svg style="left:367.5px;top:683.3px;" width="13" height="13" viewBox="0 0 13 13"><circle cx="6.5" cy="6.5" r="6" fill="#fff" stroke="#d8d8d8" stroke-width=".8"/><path d="M3.8 3.6 L6.5 6.2 L9.2 3.6 M3.8 7 L6.5 9.6 L9.2 7" fill="none" stroke="#111" stroke-width="1.5"/></svg>
<div style="left:227.2px;top:702.2px;width:153.3px;height:20px;background:linear-gradient(#dce9fb 0,#b9d0f3 30%,#8fb3ea 70%,#6f9de2 100%);"></div>
<div class="sh" style="left:227.2px;top:706.2px;height:16px;line-height:16px;width:139.5px;text-align:center;color:#18227c;">REPORTING MAIL</div>
<svg style="left:367.5px;top:703.5px;" width="13" height="13" viewBox="0 0 13 13"><circle cx="6.5" cy="6.5" r="6" fill="#fff" stroke="#d8d8d8" stroke-width=".8"/><path d="M3.8 3.6 L6.5 6.2 L9.2 3.6 M3.8 7 L6.5 9.6 L9.2 7" fill="none" stroke="#111" stroke-width="1.5"/></svg>
<div style="left:227.2px;top:722.4px;width:153.3px;height:20px;background:linear-gradient(#dce9fb 0,#b9d0f3 30%,#8fb3ea 70%,#6f9de2 100%);"></div>
<div class="sh" style="left:227.2px;top:726.4px;height:16px;line-height:16px;width:139.5px;text-align:center;color:#18227c;">CONFIGURACIÓN</div>
<svg style="left:367.5px;top:723.7px;" width="13" height="13" viewBox="0 0 13 13"><circle cx="6.5" cy="6.5" r="6" fill="#fff" stroke="#d8d8d8" stroke-width=".8"/><path d="M3.8 3.6 L6.5 6.2 L9.2 3.6 M3.8 7 L6.5 9.6 L9.2 7" fill="none" stroke="#111" stroke-width="1.5"/></svg>
<div style="left:227.2px;top:743px;width:153.3px;height:20px;background:linear-gradient(#dce9fb 0,#b9d0f3 30%,#8fb3ea 70%,#6f9de2 100%);"></div>
<div style="left:1622.6px;top:115px;width:15.4px;height:635px;background:#fdfdfd;"></div>
<svg style="left:1624.3px;top:129.5px;" width="12" height="8" viewBox="0 0 12 8"><path d="M1.5 6.5 L6 2 L10.5 6.5" fill="none" stroke="#c6c6c6" stroke-width="1.6"/></svg>
<div style="left:396.2px;top:115px;width:1226.4px;height:635px;background:#d6e5f7;"></div>
<div style="left:396.2px;top:114.6px;width:1226.4px;height:1.2px;background:#e6f1ff;"></div>
<div style="left:396.2px;top:115.6px;width:1226.4px;height:20.2px;background:#b5cef4;border-bottom:1px solid #8296b4;box-sizing:border-box;"></div>
<div style="left:1131px;top:115.6px;width:1.4px;height:20.2px;background:#8296b4;"></div>
<div class="t mn" style="left:402.6px;top:118.7px;height:14px;line-height:14px;">Archivo</div>
<div class="t mn" style="left:446.1px;top:118.7px;height:14px;line-height:14px;">Opciones</div>
<div class="t mn" style="left:497.9px;top:118.7px;height:14px;line-height:14px;">Ayuda</div>
<div class="ttl" style="left:1132.4px;top:116px;height:20px;line-height:20px;width:490.2px;text-align:center;">Contactos Potenciales</div>
<div style="left:396.2px;top:135.8px;width:1226.4px;height:22.8px;background:#a9c5ef;"></div>
<svg style="left:399.8px;top:140.4px;" width="14.4" height="14.4" viewBox="0 0 16 16"><path d="M3.6 2 H9.6 L12.8 5.2 V14.4 H3.6Z" fill="#fff" stroke="#0c1020" stroke-width="1.4" stroke-linejoin="round"/><path d="M9.6 2 V5.2 H12.8" fill="none" stroke="#0c1020" stroke-width="1"/></svg><svg style="left:422.6px;top:140.4px;" width="14.4" height="14.4" viewBox="0 0 16 16"><rect x="1.5" y="1.5" width="13" height="13" fill="#8d8d94"/><rect x="4" y="2.5" width="8" height="5" fill="#c9cdd6"/><rect x="4.5" y="10" width="7" height="4.5" fill="#d7dbe4"/><rect x="5.5" y="11" width="2" height="3" fill="#8d8d94"/></svg><div style="left:443.4px;top:140px;width:1.2px;height:15.2px;background:#9db1d3;"></div><svg style="left:450.5px;top:140.4px;" width="14.4" height="14.4" viewBox="0 0 16 16"><path d="M4.4 6.2 L5.6 1.6 H12.8 L11.6 6.2Z" fill="#f4f6fb" stroke="#1c2748" stroke-width="1.2"/><path d="M6.6 3.4 H11.2 M6.2 4.8 H10.8" stroke="#6b7690" stroke-width=".7"/><rect x="1" y="6" width="14" height="6.2" rx="2" fill="#2a3a66" stroke="#141c36" stroke-width="1"/><rect x="2.6" y="8.2" width="10.8" height="1.5" fill="#e9e3b0"/><path d="M3.2 11.6 H12.8 L12 14.8 H4Z" fill="#dfe5f2" stroke="#141c36" stroke-width="1.1"/></svg><svg style="left:474.5px;top:140.4px;" width="14.4" height="14.4" viewBox="0 0 16 16"><path d="M2.5 2.5 L13.5 13.5 M13.5 2.5 L2.5 13.5" stroke="#000" stroke-width="2" fill="none" stroke-linecap="round"/></svg><div style="left:494.6px;top:140px;width:1.2px;height:15.2px;background:#9db1d3;"></div><svg style="left:502.8px;top:140.4px;" width="14.4" height="14.4" viewBox="0 0 16 16"><path d="M3 1.5 H10.2 L13.4 4.7 V14.6 H3Z" fill="#f2f8f0" stroke="#3a4258" stroke-width="1.1"/><path d="M10.2 1.5 V4.7 H13.4" fill="none" stroke="#3a4258" stroke-width=".9"/><path d="M5.4 8.2 A3 3 0 0 1 10.6 6.6 M11 9.4 A3 3 0 0 1 5.8 11" fill="none" stroke="#34a534" stroke-width="1.8"/><path d="M9.4 4.8 L11.9 7.3 L8.5 7.7Z M7 13 L4.6 10.6 L8 10.2Z" fill="#34a534"/></svg><div style="left:523px;top:140px;width:1.2px;height:15.2px;background:#9db1d3;"></div><svg style="left:530.8px;top:140.4px;" width="14.4" height="14.4" viewBox="0 0 16 16"><path d="M1.5 5 H6 L7 6.5 H14.5 V14 H1.5Z" fill="#b9bfca" stroke="#8a8f9b" stroke-width="1"/><path d="M4 2 L8 5 M8 2 L4 5" stroke="#8a8f9b" stroke-width="1.2"/><rect x="8.5" y="9" width="4.5" height="3.5" fill="#d5d9e2" stroke="#8a8f9b" stroke-width=".8"/></svg><div style="left:551.4px;top:140px;width:1.2px;height:15.2px;background:#9db1d3;"></div><svg style="left:559px;top:140.4px;" width="14.4" height="14.4" viewBox="0 0 16 16"><rect x="1.2" y="1.2" width="13.6" height="13.6" fill="#c9ecc0" stroke="#3c8f3c" stroke-width="1.5"/><path d="M4.6 3.6 L11.6 12.6 M12 3.6 L4.2 12.6" stroke="#17771f" stroke-width="2.6" fill="none"/></svg><svg style="left:582.5px;top:140.4px;" width="14.4" height="14.4" viewBox="0 0 16 16"><rect x="1" y="1" width="9.6" height="9.6" fill="#c9ecc0" stroke="#3c8f3c" stroke-width="1.2"/><path d="M3.4 2.8 L8.2 9 M8.4 2.8 L3.2 9" stroke="#17771f" stroke-width="1.9" fill="none"/><rect x="8.8" y="8.8" width="6" height="6" fill="#c5cfe6" stroke="#8c97b4" stroke-width="1"/><path d="M10.4 13.6 V11.8 M11.9 13.6 V10.6 M13.4 13.6 V11.2" stroke="#6a78a0" stroke-width=".9"/></svg>
<div class="t" style="left:404.6px;top:165.8px;height:14px;line-height:14px;">Filtro</div>
<div style="left:448.4px;top:164.4px;width:354.4px;height:16.8px;background:#fff;border:1px solid #9fb4d6;box-sizing:border-box;"></div>
<div class="t" style="left:1385px;top:167.4px;height:14px;line-height:14px;color:#a01818;">Nº de Registros *</div>
<div style="left:1474.3px;top:166.4px;width:44.5px;height:16.6px;background:#fff;border:1px solid #9fb4d6;box-sizing:border-box;"></div>
<div class="t" style="left:1474.3px;top:167.8px;height:14px;line-height:14px;width:41.5px;text-align:right;">50</div>
<div style="left:404.6px;top:189.6px;width:1209.4px;height:560.4px;background:#f1f3f8;border:1.6px solid #8f949e;box-sizing:border-box;"></div>
<div style="left:404.6px;top:189.6px;width:1209.4px;height:19.8px;background:#7797c9;border:1px solid #8a97ad;border-top:1.6px solid #8e9bb3;box-sizing:border-box;"></div>
<div style="left:425.5px;top:191px;width:1px;height:18px;background:#bccfee;"></div>
<div class="gh" style="left:426px;top:194px;height:14px;line-height:14px;width:88.3px;text-align:center;">Propietario</div>
<div style="left:513.8px;top:191px;width:1px;height:18px;background:#bccfee;"></div>
<div class="gh" style="left:514.3px;top:194px;height:14px;line-height:14px;width:204.7px;text-align:center;">Nombre</div>
<div style="left:718.5px;top:191px;width:1px;height:18px;background:#bccfee;"></div>
<div class="gh" style="left:719px;top:194px;height:14px;line-height:14px;width:157.5px;text-align:center;">Nombre Empresa</div>
<div style="left:876px;top:191px;width:1px;height:18px;background:#bccfee;"></div>
<div class="gh" style="left:876.5px;top:194px;height:14px;line-height:14px;width:95.1px;text-align:center;">Teléfono</div>
<div style="left:971.1px;top:191px;width:1px;height:18px;background:#bccfee;"></div>
<div class="gh" style="left:971.6px;top:194px;height:14px;line-height:14px;width:386px;text-align:center;">Tema</div>
<div style="left:1357.1px;top:191px;width:1px;height:18px;background:#bccfee;"></div>
<div class="gh" style="left:1357.6px;top:194px;height:14px;line-height:14px;width:94.7px;text-align:center;">Fecha de Creación</div>
<div style="left:1451.8px;top:191px;width:1px;height:18px;background:#bccfee;"></div>
<div class="gh" style="left:1452.3px;top:194px;height:14px;line-height:14px;width:88.7px;text-align:center;">Nivel de Interés</div>
<div style="left:1540.5px;top:191px;width:1px;height:18px;background:#bccfee;"></div>
<div class="gh" style="left:1541px;top:194px;height:14px;line-height:14px;width:73px;text-align:center;">Estado</div>
<div style="left:405.6px;top:209.4px;width:1207.4px;height:19.4px;background:linear-gradient(#e2e2e8 0,#d4d4dc 50%,#c8c8d3 100%);"></div>
<div style="left:406.2px;top:209.4px;width:19.2px;height:39px;background:#7394c8;"></div>
<div style="left:406.2px;top:208.9px;width:1206.8px;height:1px;background:#c3d3ec;"></div>
<div style="left:406.2px;top:228.6px;width:19.2px;height:1px;background:#c3d3ec;"></div>
<svg style="left:413.5px;top:214.5px;" width="8" height="11" viewBox="0 0 8 11"><path d="M1 0.5 L7.5 5.5 L1 10.5Z" fill="#000"/></svg>
<div class="t" style="left:430.5px;top:213.2px;height:14px;line-height:14px;">admincrm</div>
<div class="t" style="left:518.3px;top:213.2px;height:14px;line-height:14px;">Juan Garcia</div>
<div class="t" style="left:722.6px;top:213.2px;height:14px;line-height:14px;">EMPRESA, S.L</div>
<div class="t" style="left:879.6px;top:213.2px;height:14px;line-height:14px;">93 555 55 51</div>
<div class="t" style="left:975.2px;top:213.2px;height:14px;line-height:14px;">Venta producto</div>
<div class="t" style="left:1357.6px;top:213.2px;height:14px;line-height:14px;width:94.7px;text-align:center;">27/10/2015</div>
<div class="t" style="left:1452.3px;top:213.2px;height:14px;line-height:14px;width:88.7px;text-align:center;">Algo Interesado</div>
<div class="t" style="left:1541px;top:213.2px;height:14px;line-height:14px;width:73px;text-align:center;">Nuevo</div>
<div style="left:404.6px;top:741px;width:1209.4px;height:9px;background:linear-gradient(90deg,#d9d9dd 0,#d4d4d8 56.5%,#ededf0 59.5%,#f1f1f4 100%);"></div>
<div style="left:404.6px;top:748.2px;width:1209.4px;height:1.8px;background:linear-gradient(#9a9a9c,#6c6c6e);"></div>
<div class="win p1" style="left:411.6px;top:224.6px;width:646.4px;height:516.4px;">
<div class="abs" style="left:-411.6px;top:-224.6px;width:1900px;height:750px;">
<div style="left:411.6px;top:224.6px;width:694.4px;height:516.4px;background:#4f7db3;"></div>
<div style="left:412.8px;top:252px;width:692px;height:488px;background:#f3f7fc;"></div>
<div style="left:411.6px;top:252px;width:2.6px;height:466.4px;background:#4f78a4;"></div>
<div style="left:411.6px;top:224.6px;width:694.4px;height:27.4px;background:#0366b6;"></div>
<div style="left:419.6px;top:230.4px;width:14.4px;height:13.8px;background:#fdfdf6;"></div>
<svg style="left:420.2px;top:230.8px;" width="13.2" height="13.2" viewBox="0 0 16 16"><circle cx="8" cy="8.6" r="5" fill="none" stroke="#2b9be3" stroke-width="2.7"/><rect x="4" y="7.7" width="9.4" height="1.9" fill="#2b9be3"/><rect x="9.2" y="9.6" width="5" height="2.1" fill="#fdfdf6"/><path d="M1.6 12.4 C0.6 7.4 7 2.2 14.6 3" fill="none" stroke="#f0c430" stroke-width="1.6"/></svg>
<div class="tb" style="left:438.4px;top:230.6px;height:14px;line-height:14px;letter-spacing:-0.085px;">http://crm.navidian.net/?mode=2&amp;parms=5&amp;IDpotenc=5&amp;IDactiv=1b5c6cf3-65c9-4977-8c03-1c8192f331bc - Navi...</div>
<svg style="left:999.5px;top:233px;" width="11" height="11" viewBox="0 0 11 11"><path d="M0.5 5.4 H10.4" stroke="#fff" stroke-width="1.3"/></svg><svg style="left:1039.5px;top:232.5px;" width="10" height="11" viewBox="0 0 10 11"><rect x="0.8" y="0.8" width="8.4" height="9.2" fill="none" stroke="#3f86c9" stroke-width="1"/></svg>
<div style="left:412.8px;top:252px;width:692px;height:1.2px;background:#97a3b6;"></div>
<div style="left:414.2px;top:253.2px;width:689px;height:465.4px;background:#d6e5f7;"></div>
<div style="left:414.2px;top:253.2px;width:132.3px;height:465.4px;background:#f0f0eb;"></div>
<div style="left:414.2px;top:253.2px;width:132.3px;height:29.4px;background:linear-gradient(#c3d6f6 0,#a9c4ef 25%,#8db0e6 55%,#83a8e2 70%,#d6e4f9 76%,#e3edfc 100%);"></div>
<div class="ph" style="left:414.2px;top:254.9px;height:15px;line-height:15px;width:132.3px;text-align:center;">CONTACTO</div>
<div class="ph" style="left:414.2px;top:268.7px;height:15px;line-height:15px;width:132.3px;text-align:center;">POTENCIAL</div>
<div style="left:414.2px;top:282.6px;width:132.3px;height:34px;background:#ffe3a2;border-top:1px solid #f9cf85;border-bottom:1px solid #f7c57a;box-sizing:border-box;"></div>
<svg style="left:421.8px;top:291.8px;" width="16" height="16" viewBox="0 0 16 16"><path d="M4.4 1.2 Q0.8 1.6 0.8 6 Q1.2 11.6 6 14.8 Q8.2 15.4 8.8 13.2 L6.6 10.8 Q5.4 11.8 4.7 10.4 Q3.5 8 4 5.6 Q5.8 5.6 6 3.8Z" fill="#4a4fa6" stroke="#2c2f74" stroke-width=".7"/><path d="M2.2 4 Q2 8 4.6 11.8" fill="none" stroke="#d5d8f4" stroke-width="1"/><circle cx="11" cy="4.4" r="3" fill="#6a7288" stroke="#474e62" stroke-width=".6"/><path d="M6.9 14 Q6.9 8.2 11.1 8.2 Q15.5 8.2 15.5 14Z" fill="#2f6fd6" stroke="#1c4ca6" stroke-width=".6"/><circle cx="10.6" cy="4" r="1.3" fill="#b4bdd2"/><path d="M9.2 11 H13" stroke="#a8c8f6" stroke-width="1.1"/></svg>
<div class="pi" style="left:445px;top:294.1px;height:14px;line-height:14px;color:#000;font-size:9.05px;">INFORMACIÓN</div>
<svg style="left:423.4px;top:326.4px;" width="14.6" height="14.6" viewBox="0 0 16 16"><path d="M2.6 1.6 H10.4 L13 4.2 V14.4 H2.6Z" fill="#dbe7f9" stroke="#6f86c0" stroke-width="1.1"/><path d="M4.4 4.6 H9 M4.4 7 H8" stroke="#9fb4e0" stroke-width=".9"/><path d="M6.4 9.4 L8.2 12.2 L13.6 3.4" stroke="#de3a3c" stroke-width="2.1" fill="none"/></svg>
<div class="pi" style="left:445px;top:328px;height:14px;line-height:14px;color:#8e8e8e;font-size:9.05px;">ACTIVIDADES</div>
<div style="left:415.7px;top:349.6px;width:129.8px;height:1.4px;background:#fafaf6;"></div>
<svg style="left:423.4px;top:359.9px;" width="14.6" height="14.6" viewBox="0 0 16 16"><path d="M6 2.6 H14.8 V9.4 Q14.6 13.4 10 13.6 H4.6 L6 9Z" fill="#f1d94c" stroke="#9c8a1c" stroke-width="1"/><path d="M10.2 13.4 Q11.4 10.4 14.6 10" fill="none" stroke="#9c8a1c" stroke-width=".9"/><path d="M0.8 5.6 H6 M4 3 L6.8 5.6 L4 8.2" stroke="#2244cc" stroke-width="1.8" fill="none"/></svg>
<div class="pi" style="left:445px;top:361.5px;height:14px;line-height:14px;color:#8e8e8e;font-size:9.05px;">NOTAS</div>
<div style="left:415.7px;top:383.1px;width:129.8px;height:1.4px;background:#fafaf6;"></div>
<svg style="left:423.4px;top:393.4px;" width="14.6" height="14.6" viewBox="0 0 16 16"><rect x="1.2" y="1.8" width="12.4" height="10.6" fill="#f2f4f8" stroke="#6a7288" stroke-width="1.1"/><rect x="1.8" y="2.4" width="11.2" height="2.2" fill="#8f9ab4"/><circle cx="11" cy="11.4" r="4.3" fill="#2ea52e" stroke="#1c7a1c" stroke-width=".5"/><path d="M11 8.8 V14 M8.4 11.4 H13.6" stroke="#d8f8d0" stroke-width="1.9"/></svg>
<div class="pi" style="left:445px;top:395px;height:14px;line-height:14px;color:#8e8e8e;font-size:9.05px;">AGRUPAR</div>
<div style="left:415.7px;top:416.6px;width:129.8px;height:1.4px;background:#fafaf6;"></div>
<div style="left:546.5px;top:253.8px;width:556.7px;height:20.8px;background:#b5cef4;border-bottom:1px solid #8296b4;box-sizing:border-box;"></div>
<div style="left:546.5px;top:253.8px;width:1.2px;height:20.8px;background:#e9f1fd;"></div>
<div style="left:769.5px;top:253.8px;width:1.4px;height:20.8px;background:#8296b4;"></div>
<div class="t mn" style="left:553.5px;top:257.8px;height:14px;line-height:14px;">Archivo</div>
<div class="t mn" style="left:597.5px;top:257.8px;height:14px;line-height:14px;">Opciones</div>
<div class="t mn" style="left:648.8px;top:257.8px;height:14px;line-height:14px;">Ayuda</div>
<div class="pt" style="left:769.5px;top:257.6px;height:14px;line-height:14px;width:333.7px;text-align:center;">Juan Garcia</div>
<div style="left:546.5px;top:274.6px;width:556.7px;height:23px;background:#a9c5ef;"></div>
<svg style="left:550.9px;top:278.8px;" width="14.4" height="14.4" viewBox="0 0 16 16"><path d="M3.6 2 H9.6 L12.8 5.2 V14.4 H3.6Z" fill="#fff" stroke="#0c1020" stroke-width="1.4" stroke-linejoin="round"/><path d="M9.6 2 V5.2 H12.8" fill="none" stroke="#0c1020" stroke-width="1"/></svg><svg style="left:574.1px;top:278.8px;" width="14.4" height="14.4" viewBox="0 0 16 16"><path d="M1.8 2 H13.2 L14.4 3.2 V14.2 H1.8Z" fill="#15150c"/><rect x="4.6" y="2.6" width="6.6" height="5" fill="#d3d9f6"/><rect x="3.2" y="9.4" width="9.6" height="4.8" fill="#3a3a14"/><rect x="9.6" y="10.4" width="2.2" height="3.2" fill="#f4f4f4"/></svg><div style="left:594.2px;top:278.4px;width:1.2px;height:15.2px;background:#9db1d3;"></div><svg style="left:602.3px;top:278.8px;" width="14.4" height="14.4" viewBox="0 0 16 16"><path d="M4.4 6.2 L5.6 1.6 H12.8 L11.6 6.2Z" fill="#f4f6fb" stroke="#1c2748" stroke-width="1.2"/><path d="M6.6 3.4 H11.2 M6.2 4.8 H10.8" stroke="#6b7690" stroke-width=".7"/><rect x="1" y="6" width="14" height="6.2" rx="2" fill="#2a3a66" stroke="#141c36" stroke-width="1"/><rect x="2.6" y="8.2" width="10.8" height="1.5" fill="#e9e3b0"/><path d="M3.2 11.6 H12.8 L12 14.8 H4Z" fill="#dfe5f2" stroke="#141c36" stroke-width="1.1"/></svg><svg style="left:625.4px;top:278.8px;" width="14.4" height="14.4" viewBox="0 0 16 16"><path d="M2.5 2.5 L13.5 13.5 M13.5 2.5 L2.5 13.5" stroke="#7a7f8a" stroke-width="1.6" fill="none" stroke-linecap="round"/></svg><div style="left:645.7px;top:278.4px;width:1.2px;height:15.2px;background:#9db1d3;"></div><svg style="left:654.1px;top:278.8px;" width="14.4" height="14.4" viewBox="0 0 16 16"><path d="M3 1.5 H10.2 L13.4 4.7 V14.6 H3Z" fill="#f2f8f0" stroke="#3a4258" stroke-width="1.1"/><path d="M10.2 1.5 V4.7 H13.4" fill="none" stroke="#3a4258" stroke-width=".9"/><path d="M5.4 8.2 A3 3 0 0 1 10.6 6.6 M11 9.4 A3 3 0 0 1 5.8 11" fill="none" stroke="#34a534" stroke-width="1.8"/><path d="M9.4 4.8 L11.9 7.3 L8.5 7.7Z M7 13 L4.6 10.6 L8 10.2Z" fill="#34a534"/></svg><div style="left:674.2px;top:278.4px;width:1.2px;height:15.2px;background:#9db1d3;"></div><svg style="left:681.9px;top:278.8px;" width="14.4" height="14.4" viewBox="0 0 16 16"><path d="M1.5 5 H6 L7 6.5 H14.5 V14 H1.5Z" fill="#b9bfca" stroke="#8a8f9b" stroke-width="1"/><path d="M4 2 L8 5 M8 2 L4 5" stroke="#8a8f9b" stroke-width="1.2"/><rect x="8.5" y="9" width="4.5" height="3.5" fill="#d5d9e2" stroke="#8a8f9b" stroke-width=".8"/></svg>
<div style="left:556.8px;top:320.6px;width:539.2px;height:390px;background:#d6e5f7;border:1.4px solid #8496b4;box-sizing:border-box;"></div>
<div style="left:556.8px;top:303.6px;width:88.1px;height:18.6px;background:#d6e5f7;border:1.4px solid #8496b4;border-bottom:0;border-top:2.6px solid #f3a838;box-sizing:border-box;"></div>
<div class="t" style="left:556.8px;top:307px;height:14px;line-height:14px;width:88.1px;text-align:center;">General</div>
<div style="left:649.5px;top:304.4px;width:88.1px;height:16.4px;background:linear-gradient(#fcfcfe,#eef0f8);border:1.2px solid #8c9ab4;border-bottom:0;box-sizing:border-box;"></div>
<div class="t" style="left:649.5px;top:307px;height:14px;line-height:14px;width:88.1px;text-align:center;">Detalle</div>
<div class="t" style="left:573.7px;top:334.9px;height:14px;line-height:14px;color:#a41c1c;">Nombre *</div>
<div style="left:662.4px;top:332.9px;width:421.6px;height:16px;background:#fff;border:1px solid #9cb2d4;box-sizing:border-box;"></div><div class="t" style="left:663.6px;top:333.4px;height:14px;line-height:14px;"><span style="background:#0a6fd0;color:#fff;padding:1.5px 0 2px">Juan Garcia</span></div>
<div class="t" style="left:573.7px;top:355.9px;height:14px;line-height:14px;color:#a41c1c;">Tema *</div>
<div style="left:662.4px;top:354px;width:421.6px;height:15.7px;background:#fff;border:1px solid #9cb2d4;box-sizing:border-box;"></div><div class="t" style="left:663.9px;top:354.35px;height:14px;line-height:14px;">Venta producto</div>
<div class="t" style="left:573.7px;top:377.1px;height:14px;line-height:14px;color:#a41c1c;">Nombre Empresa *</div>
<div style="left:662.4px;top:375.5px;width:145.2px;height:15.9px;background:#fff;border:1px solid #9cb2d4;box-sizing:border-box;"></div><div class="t" style="left:663.9px;top:375.95px;height:14px;line-height:14px;">EMPRESA, S.L</div>
<div class="t" style="left:573.7px;top:398.7px;height:14px;line-height:14px;color:#111;">Puesto</div>
<div style="left:662.4px;top:396.5px;width:145.2px;height:15.9px;background:#fff;border:1px solid #9cb2d4;box-sizing:border-box;"></div><div class="t" style="left:663.9px;top:396.95px;height:14px;line-height:14px;">Compras</div>
<div class="t" style="left:837.8px;top:379.1px;height:14px;line-height:14px;color:#111;">Nivel de Interés</div>
<div style="left:926.2px;top:377.2px;width:143.8px;height:16px;background:#fff;border:1px solid #c9ccd2;border-top:2px solid #5d6066;border-left:2px solid #5d6066;box-sizing:border-box;"></div><div class="t" style="left:930.8px;top:378.6px;height:14px;line-height:14px;">Algo Interesado</div><div style="left:1053.2px;top:379.2px;width:15.8px;height:13px;background:#fff;border:1px solid #8a8d93;box-sizing:border-box;"></div><svg style="left:1055.7px;top:381.8px;" width="11" height="8" viewBox="0 0 11 8"><path d="M1.8 1.8 L5.5 5.6 L9.2 1.8" fill="none" stroke="#111" stroke-width="1.5"/></svg>
<div class="t" style="left:837.8px;top:400.3px;height:14px;line-height:14px;color:#1a22c8;">Fase Cualificación »</div>
<div style="left:926.2px;top:398.4px;width:143.8px;height:16px;background:#fff;border:1px solid #c9ccd2;border-top:2px solid #5d6066;border-left:2px solid #5d6066;box-sizing:border-box;"></div><div class="t" style="left:930.8px;top:399.8px;height:14px;line-height:14px;">Llamada Contacto Inicial</div><div style="left:1053.2px;top:400.4px;width:15.8px;height:13px;background:#fff;border:1px solid #8a8d93;box-sizing:border-box;"></div><svg style="left:1055.7px;top:403px;" width="11" height="8" viewBox="0 0 11 8"><path d="M1.8 1.8 L5.5 5.6 L9.2 1.8" fill="none" stroke="#111" stroke-width="1.5"/></svg>
<div class="sec" style="left:573.7px;top:422.9px;height:14px;line-height:14px;">Información de Contacto</div><div style="left:573.7px;top:438.7px;width:505.3px;height:1.8px;background:#7f93b1;"></div>
<div class="t" style="left:573.7px;top:451.5px;height:14px;line-height:14px;color:#1a22c8;">Teléfono »</div>
<div style="left:662.4px;top:449.6px;width:145.2px;height:16px;background:#fff;border:1px solid #9cb2d4;box-sizing:border-box;"></div><div class="t" style="left:663.9px;top:451px;height:14px;line-height:14px;">93 555 55 51</div>
<div class="t" style="left:836.8px;top:451.5px;height:14px;line-height:14px;color:#111;">Fax</div>
<div style="left:925.6px;top:449.6px;width:147px;height:16px;background:#fff;border:1px solid #9cb2d4;box-sizing:border-box;"></div><div class="t" style="left:927.1px;top:451px;height:14px;line-height:14px;">93 555 55 55</div>
<div class="t" style="left:573.7px;top:472.9px;height:14px;line-height:14px;color:#111;">Teléfono 2</div>
<div style="left:662.4px;top:471px;width:145.2px;height:16px;background:#fff;border:1px solid #9cb2d4;box-sizing:border-box;"></div><div class="t" style="left:663.9px;top:472.4px;height:14px;line-height:14px;">95 555 55 52</div>
<div class="t" style="left:836.8px;top:472.9px;height:14px;line-height:14px;color:#111;">Sitio Web</div>
<div style="left:925.6px;top:471px;width:147px;height:16px;background:#fff;border:1px solid #9cb2d4;box-sizing:border-box;"></div><div class="t" style="left:927.1px;top:472.4px;height:14px;line-height:14px;">www.nestdata.com</div>
<div class="t" style="left:573.7px;top:494.3px;height:14px;line-height:14px;color:#111;">Extensión</div>
<div style="left:662.4px;top:492.4px;width:145.2px;height:16px;background:#fff;border:1px solid #9cb2d4;box-sizing:border-box;"></div><div class="t" style="left:663.9px;top:493.8px;height:14px;line-height:14px;">203</div>
<div class="t" style="left:836.8px;top:494.3px;height:14px;line-height:14px;color:#1a22c8;">Email Contacto »</div>
<div style="left:925.6px;top:492.4px;width:147px;height:16px;background:#fff;border:1px solid #9cb2d4;box-sizing:border-box;"></div><div class="t" style="left:927.1px;top:493.8px;height:14px;line-height:14px;">info@nestdata.com</div>
<div class="t" style="left:573.7px;top:516.1px;height:14px;line-height:14px;color:#111;">Teléfono Personal</div>
<div style="left:662.4px;top:514.2px;width:145.2px;height:16px;background:#fff;border:1px solid #9cb2d4;box-sizing:border-box;"></div><div class="t" style="left:663.9px;top:515.6px;height:14px;line-height:14px;">645555555</div>
<div class="t" style="left:836.8px;top:516.1px;height:14px;line-height:14px;color:#111;">Email Empresa</div>
<div style="left:925.6px;top:514.2px;width:147px;height:16px;background:#fff;border:1px solid #9cb2d4;box-sizing:border-box;"></div><div class="t" style="left:927.1px;top:515.6px;height:14px;line-height:14px;">info@nestdata.com</div>
<div class="t" style="left:573.7px;top:538.1px;height:14px;line-height:14px;color:#111;">Teléfono Móvil</div>
<div style="left:662.4px;top:536.2px;width:145.2px;height:16px;background:#fff;border:1px solid #9cb2d4;box-sizing:border-box;"></div><div class="t" style="left:663.9px;top:537.6px;height:14px;line-height:14px;">645333333</div>
<div class="t" style="left:836.8px;top:538.1px;height:14px;line-height:14px;color:#111;">Frecuencia</div>
<div style="left:925.6px;top:536.2px;width:70px;height:16px;background:#fff;border:1px solid #9cb2d4;box-sizing:border-box;"></div><div class="t" style="left:925.6px;top:537.6px;height:14px;line-height:14px;width:66.8px;text-align:right;">2</div>
<div class="t" style="left:1002px;top:538.1px;height:14px;line-height:14px;color:#7d7f86;">Días</div>
<div class="sec" style="left:573.7px;top:565.2px;height:14px;line-height:14px;">Notas</div><div style="left:573.7px;top:582.3px;width:505.3px;height:1.8px;background:#7f93b1;"></div>
<div style="left:573.4px;top:593.2px;width:510.6px;height:106px;background:#fff;border:1px solid #9cb2d4;box-sizing:border-box;"></div>
<div class="t" style="left:575.3px;top:594.8px;height:14px;line-height:14px;letter-spacing:-0.1px;">Anotaciones</div>
<div style="left:412.8px;top:718.6px;width:692px;height:21.4px;background:#f0f0f0;border-top:1px solid #fbfbfb;box-sizing:border-box;"></div>
<svg style="left:1026.2px;top:723.6px;" width="13" height="13" viewBox="0 0 16 16"><circle cx="6.5" cy="6.5" r="4.6" fill="#dbeafc" stroke="#3a78c8" stroke-width="1.6"/><path d="M6.5 4.2 V8.8 M4.2 6.5 H8.8" stroke="#2a5fb0" stroke-width="1.5"/><path d="M10 10 L14.5 14.5" stroke="#9a6a4a" stroke-width="2.2"/></svg>
<div class="ui" style="left:1040.8px;top:723.8px;height:14px;line-height:14px;color:#111;font-size:10.5px;letter-spacing:-0.2px;">100%</div>
<svg style="left:1075.5px;top:727px;" width="10" height="8" viewBox="0 0 10 8"><path d="M1.2 1.8 H8.8 L5 6Z" fill="#111"/></svg>
<svg style="left:1092.5px;top:728.5px;" width="10" height="10" viewBox="0 0 10 10"><path d="M8 2 V3.2 M8 5 V6.2 M8 8 V9.2 M5 5 V6.2 M5 8 V9.2 M2 8 V9.2" stroke="#b9bdc4" stroke-width="1.4"/></svg>
</div></div>
<div class="win p2" style="left:1056px;top:224px;width:707px;height:517px;">
<div class="abs" style="left:-1056px;top:-224px;width:1900px;height:750px;">
<div style="left:1056px;top:224px;width:707px;height:517px;background:#86abd6;"></div>
<div style="left:1057.2px;top:252px;width:704.6px;height:488px;background:#f3f7fc;"></div>
<div style="left:1056px;top:252px;width:2.6px;height:466.4px;background:#4f78a4;"></div>
<div style="left:1056px;top:224px;width:707px;height:27.6px;background:#0366b6;"></div>
<div style="left:1064px;top:230.4px;width:14.4px;height:13.8px;background:#fdfdf6;"></div>
<svg style="left:1064.6px;top:230.8px;" width="13.2" height="13.2" viewBox="0 0 16 16"><circle cx="8" cy="8.6" r="5" fill="none" stroke="#2b9be3" stroke-width="2.7"/><rect x="4" y="7.7" width="9.4" height="1.9" fill="#2b9be3"/><rect x="9.2" y="9.6" width="5" height="2.1" fill="#fdfdf6"/><path d="M1.6 12.4 C0.6 7.4 7 2.2 14.6 3" fill="none" stroke="#f0c430" stroke-width="1.6"/></svg>
<div class="tb" style="left:1082.8px;top:230.6px;height:14px;line-height:14px;letter-spacing:0px;">http://crm.navidian.net/?mode=2&amp;parms=5&amp;IDpotenc=5&amp;IDactiv=1b5c6cf3-65c9-4977-8c03-1c8192f331bc - Navi...</div>
<svg style="left:1654.4px;top:232px;" width="11" height="11" viewBox="0 0 11 11"><path d="M0.5 5.4 H10.4" stroke="#fff" stroke-width="1.3"/></svg><svg style="left:1695.2px;top:232.2px;" width="10" height="11" viewBox="0 0 10 11"><rect x="0.8" y="0.8" width="8.4" height="9.2" fill="none" stroke="#3f86c9" stroke-width="1"/></svg><svg style="left:1736px;top:232.2px;" width="11" height="11" viewBox="0 0 11 11"><path d="M0.8 0.8 L10.2 10.2 M10.2 0.8 L0.8 10.2" stroke="#fff" stroke-width="1.5"/></svg>
<div style="left:1057.2px;top:252px;width:704.6px;height:1.2px;background:#97a3b6;"></div>
<div style="left:1058.6px;top:253.2px;width:701.6px;height:465.4px;background:#d6e5f7;"></div>
<div style="left:1058.6px;top:253.2px;width:134.6px;height:465.4px;background:#f0f0eb;"></div>
<div style="left:1058.6px;top:253.2px;width:134.6px;height:29.4px;background:linear-gradient(#c3d6f6 0,#a9c4ef 25%,#8db0e6 55%,#83a8e2 70%,#d6e4f9 76%,#e3edfc 100%);"></div>
<div class="ph" style="left:1058.6px;top:254.9px;height:15px;line-height:15px;width:134.6px;text-align:center;">CONTACTO</div>
<div class="ph" style="left:1058.6px;top:268.7px;height:15px;line-height:15px;width:134.6px;text-align:center;">POTENCIAL</div>
<div style="left:1058.6px;top:282.6px;width:134.6px;height:34px;background:#ffe3a2;border-top:1px solid #f9cf85;border-bottom:1px solid #f7c57a;box-sizing:border-box;"></div>
<svg style="left:1066.2px;top:291.8px;" width="16" height="16" viewBox="0 0 16 16"><path d="M4.4 1.2 Q0.8 1.6 0.8 6 Q1.2 11.6 6 14.8 Q8.2 15.4 8.8 13.2 L6.6 10.8 Q5.4 11.8 4.7 10.4 Q3.5 8 4 5.6 Q5.8 5.6 6 3.8Z" fill="#4a4fa6" stroke="#2c2f74" stroke-width=".7"/><path d="M2.2 4 Q2 8 4.6 11.8" fill="none" stroke="#d5d8f4" stroke-width="1"/><circle cx="11" cy="4.4" r="3" fill="#6a7288" stroke="#474e62" stroke-width=".6"/><path d="M6.9 14 Q6.9 8.2 11.1 8.2 Q15.5 8.2 15.5 14Z" fill="#2f6fd6" stroke="#1c4ca6" stroke-width=".6"/><circle cx="10.6" cy="4" r="1.3" fill="#b4bdd2"/><path d="M9.2 11 H13" stroke="#a8c8f6" stroke-width="1.1"/></svg>
<div class="pi" style="left:1089.89px;top:294.1px;height:14px;line-height:14px;color:#000;font-size:9.19px;">INFORMACIÓN</div>
<svg style="left:1067.8px;top:326.4px;" width="14.6" height="14.6" viewBox="0 0 16 16"><path d="M2.6 1.6 H10.4 L13 4.2 V14.4 H2.6Z" fill="#dbe7f9" stroke="#6f86c0" stroke-width="1.1"/><path d="M4.4 4.6 H9 M4.4 7 H8" stroke="#9fb4e0" stroke-width=".9"/><path d="M6.4 9.4 L8.2 12.2 L13.6 3.4" stroke="#de3a3c" stroke-width="2.1" fill="none"/></svg>
<div class="pi" style="left:1089.89px;top:328px;height:14px;line-height:14px;color:#8e8e8e;font-size:9.19px;">ACTIVIDADES</div>
<div style="left:1060.1px;top:349.6px;width:132.1px;height:1.4px;background:#fafaf6;"></div>
<svg style="left:1067.8px;top:359.9px;" width="14.6" height="14.6" viewBox="0 0 16 16"><path d="M6 2.6 H14.8 V9.4 Q14.6 13.4 10 13.6 H4.6 L6 9Z" fill="#f1d94c" stroke="#9c8a1c" stroke-width="1"/><path d="M10.2 13.4 Q11.4 10.4 14.6 10" fill="none" stroke="#9c8a1c" stroke-width=".9"/><path d="M0.8 5.6 H6 M4 3 L6.8 5.6 L4 8.2" stroke="#2244cc" stroke-width="1.8" fill="none"/></svg>
<div class="pi" style="left:1089.89px;top:361.5px;height:14px;line-height:14px;color:#8e8e8e;font-size:9.19px;">NOTAS</div>
<div style="left:1060.1px;top:383.1px;width:132.1px;height:1.4px;background:#fafaf6;"></div>
<svg style="left:1067.8px;top:393.4px;" width="14.6" height="14.6" viewBox="0 0 16 16"><rect x="1.2" y="1.8" width="12.4" height="10.6" fill="#f2f4f8" stroke="#6a7288" stroke-width="1.1"/><rect x="1.8" y="2.4" width="11.2" height="2.2" fill="#8f9ab4"/><circle cx="11" cy="11.4" r="4.3" fill="#2ea52e" stroke="#1c7a1c" stroke-width=".5"/><path d="M11 8.8 V14 M8.4 11.4 H13.6" stroke="#d8f8d0" stroke-width="1.9"/></svg>
<div class="pi" style="left:1089.89px;top:395px;height:14px;line-height:14px;color:#8e8e8e;font-size:9.19px;">AGRUPAR</div>
<div style="left:1060.1px;top:416.6px;width:132.1px;height:1.4px;background:#fafaf6;"></div>
<div style="left:1193.2px;top:253.2px;width:567px;height:20.8px;background:#b5cef4;border-bottom:1px solid #8296b4;box-sizing:border-box;"></div>
<div style="left:1193.2px;top:253.2px;width:1.2px;height:20.8px;background:#e9f1fd;"></div>
<div style="left:1419.4px;top:253.2px;width:1.4px;height:20.8px;background:#8296b4;"></div>
<div class="t mn" style="left:1200.31px;top:257.2px;height:14px;line-height:14px;">Archivo</div>
<div class="t mn" style="left:1245.02px;top:257.2px;height:14px;line-height:14px;">Opciones</div>
<div class="t mn" style="left:1297.14px;top:257.2px;height:14px;line-height:14px;">Ayuda</div>
<div class="pt" style="left:1419.4px;top:257px;height:14px;line-height:14px;width:340.8px;text-align:center;">Juan Garcia</div>
<div style="left:1193.2px;top:274px;width:567px;height:23.6px;background:#a9c5ef;"></div>
<svg style="left:1197.78px;top:278.8px;" width="14.4" height="14.4" viewBox="0 0 16 16"><path d="M3.6 2 H9.6 L12.8 5.2 V14.4 H3.6Z" fill="#fff" stroke="#0c1020" stroke-width="1.4" stroke-linejoin="round"/><path d="M9.6 2 V5.2 H12.8" fill="none" stroke="#0c1020" stroke-width="1"/></svg><svg style="left:1221.35px;top:278.8px;" width="14.4" height="14.4" viewBox="0 0 16 16"><path d="M1.8 2 H13.2 L14.4 3.2 V14.2 H1.8Z" fill="#15150c"/><rect x="4.6" y="2.6" width="6.6" height="5" fill="#d3d9f6"/><rect x="3.2" y="9.4" width="9.6" height="4.8" fill="#3a3a14"/><rect x="9.6" y="10.4" width="2.2" height="3.2" fill="#f4f4f4"/></svg><div style="left:1241.67px;top:278.4px;width:1.2px;height:15.2px;background:#9db1d3;"></div><svg style="left:1250px;top:278.8px;" width="14.4" height="14.4" viewBox="0 0 16 16"><path d="M4.4 6.2 L5.6 1.6 H12.8 L11.6 6.2Z" fill="#f4f6fb" stroke="#1c2748" stroke-width="1.2"/><path d="M6.6 3.4 H11.2 M6.2 4.8 H10.8" stroke="#6b7690" stroke-width=".7"/><rect x="1" y="6" width="14" height="6.2" rx="2" fill="#2a3a66" stroke="#141c36" stroke-width="1"/><rect x="2.6" y="8.2" width="10.8" height="1.5" fill="#e9e3b0"/><path d="M3.2 11.6 H12.8 L12 14.8 H4Z" fill="#dfe5f2" stroke="#141c36" stroke-width="1.1"/></svg><svg style="left:1273.47px;top:278.8px;" width="14.4" height="14.4" viewBox="0 0 16 16"><path d="M2.5 2.5 L13.5 13.5 M13.5 2.5 L2.5 13.5" stroke="#7a7f8a" stroke-width="1.6" fill="none" stroke-linecap="round"/></svg><div style="left:1293.99px;top:278.4px;width:1.2px;height:15.2px;background:#9db1d3;"></div><svg style="left:1302.63px;top:278.8px;" width="14.4" height="14.4" viewBox="0 0 16 16"><path d="M3 1.5 H10.2 L13.4 4.7 V14.6 H3Z" fill="#f2f8f0" stroke="#3a4258" stroke-width="1.1"/><path d="M10.2 1.5 V4.7 H13.4" fill="none" stroke="#3a4258" stroke-width=".9"/><path d="M5.4 8.2 A3 3 0 0 1 10.6 6.6 M11 9.4 A3 3 0 0 1 5.8 11" fill="none" stroke="#34a534" stroke-width="1.8"/><path d="M9.4 4.8 L11.9 7.3 L8.5 7.7Z M7 13 L4.6 10.6 L8 10.2Z" fill="#34a534"/></svg><div style="left:1322.95px;top:278.4px;width:1.2px;height:15.2px;background:#9db1d3;"></div><svg style="left:1330.88px;top:278.8px;" width="14.4" height="14.4" viewBox="0 0 16 16"><path d="M1.5 5 H6 L7 6.5 H14.5 V14 H1.5Z" fill="#b9bfca" stroke="#8a8f9b" stroke-width="1"/><path d="M4 2 L8 5 M8 2 L4 5" stroke="#8a8f9b" stroke-width="1.2"/><rect x="8.5" y="9" width="4.5" height="3.5" fill="#d5d9e2" stroke="#8a8f9b" stroke-width=".8"/></svg>
<div style="left:1204.3px;top:320.6px;width:546.5px;height:391.2px;background:#d6e5f7;border:1.4px solid #8496b4;box-sizing:border-box;"></div>
<div style="left:1204.3px;top:304.4px;width:88.4px;height:16.4px;background:linear-gradient(#fcfcfe,#eef0f8);border:1.2px solid #8c9ab4;border-bottom:0;box-sizing:border-box;"></div>
<div class="t" style="left:1204.3px;top:307px;height:14px;line-height:14px;width:88.4px;text-align:center;">General</div>
<div style="left:1298.6px;top:303.6px;width:89.3px;height:18.6px;background:#d6e5f7;border:1.4px solid #8496b4;border-bottom:0;border-top:2.6px solid #f3a838;box-sizing:border-box;"></div>
<div class="t" style="left:1298.6px;top:307px;height:14px;line-height:14px;width:89.3px;text-align:center;">Detalle</div>
<div class="sec" style="left:1220.6px;top:331.4px;height:14px;line-height:14px;">Direcciones</div><div style="left:1220.6px;top:348px;width:513.2px;height:1.8px;background:#7f93b1;"></div>
<div class="t" style="left:1220.6px;top:361.1px;height:14px;line-height:14px;color:#1a22c8;">Dirección »</div>
<div style="left:1310.4px;top:359px;width:148.6px;height:16.4px;background:#fff;border:1px solid #9cb2d4;box-sizing:border-box;"></div><div class="t" style="left:1311.6px;top:360.6px;height:14px;line-height:14px;"><span style="background:#0a6fd0;color:#fff;padding:1.5px 0 2px">Av. Diagonal, 555</span></div>
<svg style="left:1445.4px;top:362.6px;" width="9.4" height="9.4" viewBox="0 0 9.4 9.4"><path d="M1.5 1.5 L7.9 7.9 M7.9 1.5 L1.5 7.9" stroke="#111" stroke-width="1.5"/></svg>
<div class="t" style="left:1220.6px;top:382.3px;height:14px;line-height:14px;color:#111;">Dirección 2</div>
<div style="left:1310.4px;top:380.5px;width:148.6px;height:15.9px;background:#fff;border:1px solid #9cb2d4;box-sizing:border-box;"></div><div class="t" style="left:1311.9px;top:381.85px;height:14px;line-height:14px;">Edificio 1</div>
<div class="t" style="left:1220.6px;top:403.5px;height:14px;line-height:14px;color:#1a22c8;">Código Postal »</div>
<div style="left:1310.4px;top:401.5px;width:72.2px;height:16px;background:#fff;border:1px solid #9cb2d4;box-sizing:border-box;"></div>
<div class="t" style="left:1487.1px;top:361.1px;height:14px;line-height:14px;color:#1a22c8;">Población »</div>
<div style="left:1576.7px;top:359px;width:148.1px;height:16.4px;background:#fff;border:1px solid #9cb2d4;box-sizing:border-box;"></div><div class="t" style="left:1578.2px;top:360.6px;height:14px;line-height:14px;">Barcelona</div>
<div class="t" style="left:1487.1px;top:382.3px;height:14px;line-height:14px;color:#1a22c8;">Provincia »</div>
<div style="left:1576.7px;top:380.5px;width:148.1px;height:15.9px;background:#fff;border:1px solid #9cb2d4;box-sizing:border-box;"></div><div class="t" style="left:1578.2px;top:381.85px;height:14px;line-height:14px;">Barcelona</div>
<div class="t" style="left:1487.1px;top:403.5px;height:14px;line-height:14px;color:#a41c1c;">País *</div>
<div style="left:1576.7px;top:401.5px;width:53.9px;height:16px;background:#fff;border:1px solid #9cb2d4;box-sizing:border-box;"></div><div class="t" style="left:1578.2px;top:402.9px;height:14px;line-height:14px;">ES</div>
<div style="left:1630px;top:401.5px;width:19.6px;height:16px;background:#c7dbf7;border:1px solid #9cb2d4;box-sizing:border-box;"></div>
<svg style="left:1632.8px;top:402.6px;" width="14" height="14" viewBox="0 0 16 16"><rect x="1" y="2" width="12" height="10" fill="#dfe9fb" stroke="#3a66c4" stroke-width="1.4"/><rect x="1" y="2" width="12" height="2.4" fill="#3a66c4"/><circle cx="10" cy="9.5" r="3.2" fill="#fff" stroke="#2a4a9a" stroke-width="1.2"/><path d="M12.2 11.8 L15 14.6" stroke="#d89a3a" stroke-width="1.8"/></svg>
<div class="t" style="left:1655.8px;top:403.7px;height:14px;line-height:14px;color:#7d7f86;">ESPAÑA</div>
<div class="sec" style="left:1220.6px;top:442.5px;height:14px;line-height:14px;">Información sobre la Empresa</div><div style="left:1220.6px;top:459.6px;width:513.2px;height:1.8px;background:#7f93b1;"></div>
<div class="t" style="left:1220.6px;top:473.7px;height:14px;line-height:14px;color:#111;">Ingresos Anuales</div>
<div style="left:1310.4px;top:471.9px;width:72.2px;height:15.9px;background:#fff;border:1px solid #9cb2d4;box-sizing:border-box;"></div><div class="t" style="left:1310.4px;top:473.25px;height:14px;line-height:14px;width:69px;text-align:right;">0,00</div>
<div class="t" style="left:1389px;top:473.7px;height:14px;line-height:14px;color:#7d7f86;">Importe</div>
<div class="t" style="left:1220.6px;top:495.9px;height:14px;line-height:14px;color:#111;">Núm. Empleados</div>
<div style="left:1310.4px;top:493.7px;width:72.2px;height:16.3px;background:#fff;border:1px solid #9cb2d4;box-sizing:border-box;"></div><div class="t" style="left:1310.4px;top:495.25px;height:14px;line-height:14px;width:69px;text-align:right;">100</div>
<div class="t" style="left:1486.1px;top:473.7px;height:14px;line-height:14px;color:#111;">Código CNAE</div>
<div style="left:1576.3px;top:471.9px;width:148.5px;height:15.9px;background:#fff;border:1px solid #9cb2d4;box-sizing:border-box;"></div><div class="t" style="left:1577.8px;top:473.25px;height:14px;line-height:14px;">20003</div>
<div class="t" style="left:1486.1px;top:495.1px;height:14px;line-height:14px;color:#111;">Sector</div>
<div style="left:1576.3px;top:493.2px;width:146.7px;height:16.1px;background:#fff;border:1px solid #c9ccd2;border-top:2px solid #5d6066;border-left:2px solid #5d6066;box-sizing:border-box;"></div><div class="t" style="left:1580.9px;top:494.65px;height:14px;line-height:14px;">Industrial</div><div style="left:1706.2px;top:495.2px;width:15.8px;height:13.1px;background:#fff;border:1px solid #8a8d93;box-sizing:border-box;"></div><svg style="left:1708.7px;top:497.8px;" width="11" height="8" viewBox="0 0 11 8"><path d="M1.8 1.8 L5.5 5.6 L9.2 1.8" fill="none" stroke="#111" stroke-width="1.5"/></svg>
<div class="sec" style="left:1220.6px;top:536.9px;height:14px;line-height:14px;">Información sobre el Contacto Potencial</div><div style="left:1220.6px;top:555.2px;width:513.2px;height:1.8px;background:#7f93b1;"></div>
<div class="t" style="left:1220.6px;top:570.5px;height:14px;line-height:14px;color:#1a22c8;">Forma de Contacto »</div>
<div style="left:1319.7px;top:568.6px;width:146.7px;height:15.9px;background:#fff;border:1px solid #c9ccd2;border-top:2px solid #5d6066;border-left:2px solid #5d6066;box-sizing:border-box;"></div><div class="t" style="left:1324.3px;top:569.95px;height:14px;line-height:14px;">Cualquiera</div><div style="left:1449.6px;top:570.6px;width:15.8px;height:12.9px;background:#fff;border:1px solid #8a8d93;box-sizing:border-box;"></div><svg style="left:1452.1px;top:573.2px;" width="11" height="8" viewBox="0 0 11 8"><path d="M1.8 1.8 L5.5 5.6 L9.2 1.8" fill="none" stroke="#111" stroke-width="1.5"/></svg>
<div class="t" style="left:1220.6px;top:590.1px;height:14px;line-height:14px;color:#1a22c8;">Origen del Contacto »</div>
<div style="left:1319.7px;top:588.4px;width:146.7px;height:15.6px;background:#fff;border:1px solid #c9ccd2;border-top:2px solid #5d6066;border-left:2px solid #5d6066;box-sizing:border-box;"></div><div class="t" style="left:1324.3px;top:589.6px;height:14px;line-height:14px;">Web</div><div style="left:1449.6px;top:590.4px;width:15.8px;height:12.6px;background:#fff;border:1px solid #8a8d93;box-sizing:border-box;"></div><svg style="left:1452.1px;top:593px;" width="11" height="8" viewBox="0 0 11 8"><path d="M1.8 1.8 L5.5 5.6 L9.2 1.8" fill="none" stroke="#111" stroke-width="1.5"/></svg>
<div class="t" style="left:1486.1px;top:567.1px;height:14px;line-height:14px;color:#111;">Fecha de Creación</div>
<div style="left:1594.4px;top:564.9px;width:71px;height:15.4px;background:#fff;border:1px solid #9cb2d4;box-sizing:border-box;background:#f0f4fc;border-color:#c9d3e4;"></div><div class="t dis" style="left:1595.9px;top:566px;height:14px;line-height:14px;">27/10/2015</div>
<div style="left:1665.2px;top:564.9px;width:19.8px;height:15.4px;background:#e6e8ec;"></div>
<svg style="left:1666.8px;top:565.4px;" width="17" height="14.6" viewBox="0 0 16 16"><rect x="1" y="2.5" width="14" height="11" fill="#e6e6e6" stroke="#777" stroke-width="1"/><rect x="1" y="2.5" width="14" height="2.4" fill="#777"/><path d="M4.5 5 V13.5 M8 5 V13.5 M1 8 H15 M1 10.8 H15" stroke="#888" stroke-width=".9"/><rect x="9.5" y="6.5" width="4.5" height="5" fill="#fff" stroke="#555" stroke-width="1.2"/></svg>
<div class="t" style="left:1486.1px;top:588.3px;height:14px;line-height:14px;color:#111;">Fecha de Modificación</div>
<div style="left:1594.4px;top:586.4px;width:71px;height:15.2px;background:#fff;border:1px solid #9cb2d4;box-sizing:border-box;background:#f0f4fc;border-color:#c9d3e4;"></div><div class="t dis" style="left:1595.9px;top:587.4px;height:14px;line-height:14px;">09/01/2019</div>
<div style="left:1665.2px;top:586.4px;width:19.8px;height:15.2px;background:#e6e8ec;"></div>
<svg style="left:1666.8px;top:586.8px;" width="17" height="14.6" viewBox="0 0 16 16"><rect x="1" y="2.5" width="14" height="11" fill="#e6e6e6" stroke="#777" stroke-width="1"/><rect x="1" y="2.5" width="14" height="2.4" fill="#777"/><path d="M4.5 5 V13.5 M8 5 V13.5 M1 8 H15 M1 10.8 H15" stroke="#888" stroke-width=".9"/><rect x="9.5" y="6.5" width="4.5" height="5" fill="#fff" stroke="#555" stroke-width="1.2"/></svg>
<div class="t" style="left:1220.6px;top:621.9px;height:14px;line-height:14px;color:#a41c1c;">Propietario *</div>
<div style="left:1319.7px;top:620px;width:71.9px;height:16px;background:#fff;border:1px solid #9cb2d4;box-sizing:border-box;"></div><div class="t" style="left:1321.2px;top:621.4px;height:14px;line-height:14px;">0</div>
<div style="left:1391px;top:620px;width:19.4px;height:16px;background:#c7dbf7;border:1px solid #9cb2d4;box-sizing:border-box;"></div>
<svg style="left:1393.6px;top:621px;" width="14" height="14" viewBox="0 0 16 16"><rect x="1" y="2" width="12" height="10" fill="#dfe9fb" stroke="#3a66c4" stroke-width="1.4"/><rect x="1" y="2" width="12" height="2.4" fill="#3a66c4"/><circle cx="10" cy="9.5" r="3.2" fill="#fff" stroke="#2a4a9a" stroke-width="1.2"/><path d="M12.2 11.8 L15 14.6" stroke="#d89a3a" stroke-width="1.8"/></svg>
<div class="t" style="left:1416.6px;top:622.1px;height:14px;line-height:14px;color:#7d7f86;">Administrador de CRM</div>
<div class="t" style="left:1220.6px;top:643.3px;height:14px;line-height:14px;color:#111;">Usuario de Creación</div>
<div style="left:1319.7px;top:641.5px;width:71.9px;height:15.7px;background:#fff;border:1px solid #9cb2d4;box-sizing:border-box;background:#f0f4fc;border-color:#c9d3e4;"></div><div class="t dis" style="left:1321.2px;top:642.75px;height:14px;line-height:14px;">0</div>
<div style="left:1391px;top:641.5px;width:19.4px;height:15.7px;background:#e6e6e6;border:1px solid #c9c9c9;box-sizing:border-box;"></div>
<svg style="left:1393.6px;top:642.4px;" width="14" height="14" viewBox="0 0 16 16"><rect x="1" y="2" width="12" height="10" fill="#f1f1f1" stroke="#c9c9c9" stroke-width="1.4"/><rect x="1" y="2" width="12" height="2.4" fill="#c9c9c9"/><circle cx="10" cy="9.5" r="3.2" fill="#fff" stroke="#9a9a9a" stroke-width="1.2"/><path d="M12.2 11.8 L15 14.6" stroke="#b9b9b9" stroke-width="1.8"/></svg>
<div class="t" style="left:1416.6px;top:643.5px;height:14px;line-height:14px;color:#7d7f86;">Administrador de CRM</div>
<div class="t" style="left:1220.6px;top:680.5px;height:14px;line-height:14px;color:#111;">Estado</div>
<div style="left:1319.7px;top:678.5px;width:146.7px;height:15.9px;background:#fff;border:1px solid #c9ccd2;border-top:2px solid #5d6066;border-left:2px solid #5d6066;box-sizing:border-box;"></div><div class="t" style="left:1324.3px;top:679.85px;height:14px;line-height:14px;">Nuevo</div><div style="left:1449.6px;top:680.5px;width:15.8px;height:12.9px;background:#fff;border:1px solid #8a8d93;box-sizing:border-box;"></div><svg style="left:1452.1px;top:683.1px;" width="11" height="8" viewBox="0 0 11 8"><path d="M1.8 1.8 L5.5 5.6 L9.2 1.8" fill="none" stroke="#111" stroke-width="1.5"/></svg>
<div style="left:1057.2px;top:718.6px;width:704.6px;height:21.4px;background:#f0f0f0;border-top:1px solid #fbfbfb;box-sizing:border-box;"></div>
<svg style="left:1681px;top:723.6px;" width="13" height="13" viewBox="0 0 16 16"><circle cx="6.5" cy="6.5" r="4.6" fill="#dbeafc" stroke="#3a78c8" stroke-width="1.6"/><path d="M6.5 4.2 V8.8 M4.2 6.5 H8.8" stroke="#2a5fb0" stroke-width="1.5"/><path d="M10 10 L14.5 14.5" stroke="#9a6a4a" stroke-width="2.2"/></svg>
<div class="ui" style="left:1695.6px;top:723.8px;height:14px;line-height:14px;color:#111;font-size:10.5px;letter-spacing:-0.2px;">100%</div>
<svg style="left:1732.5px;top:727px;" width="10" height="8" viewBox="0 0 10 8"><path d="M1.2 1.8 H8.8 L5 6Z" fill="#111"/></svg>
<svg style="left:1749.5px;top:728.5px;" width="10" height="10" viewBox="0 0 10 10"><path d="M8 2 V3.2 M8 5 V6.2 M8 8 V9.2 M5 5 V6.2 M5 8 V9.2 M2 8 V9.2" stroke="#b9bdc4" stroke-width="1.4"/></svg>
</div></div>
</body>
</html>
